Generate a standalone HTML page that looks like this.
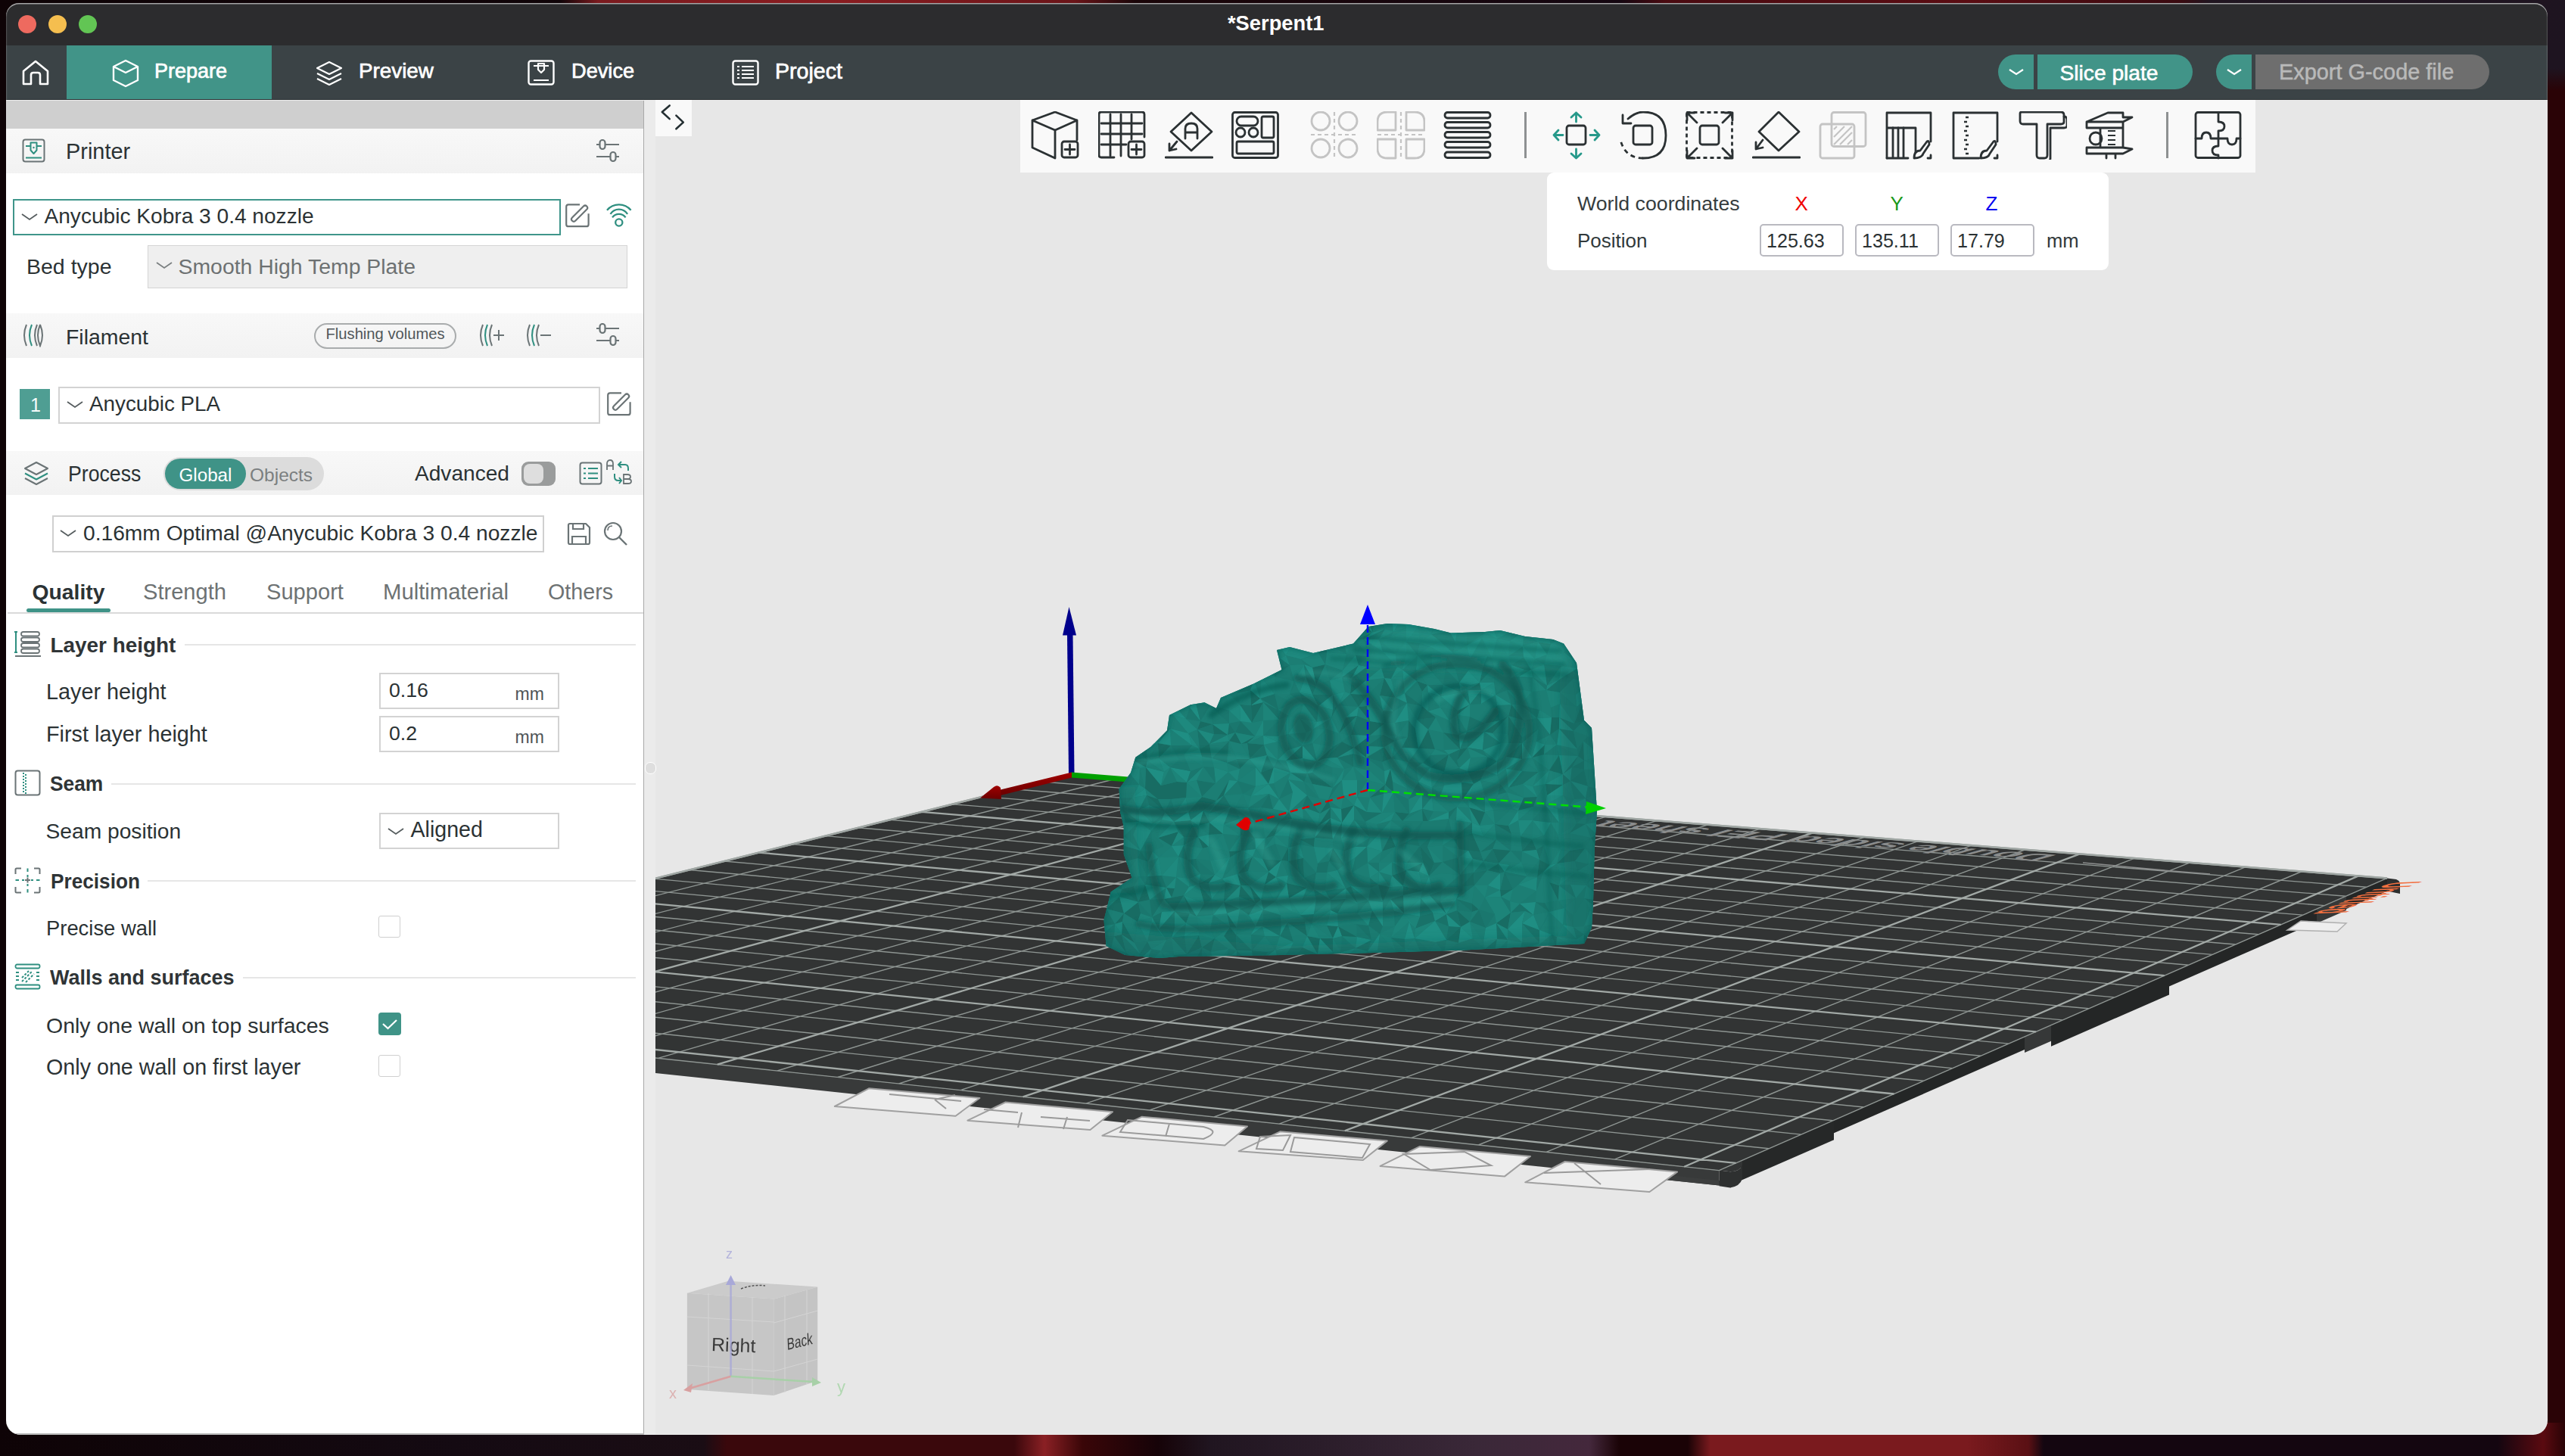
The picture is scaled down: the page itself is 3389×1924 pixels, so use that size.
<!DOCTYPE html><html><head><meta charset="utf-8"><style>
html,body{margin:0;padding:0;width:3389px;height:1924px;overflow:hidden;background:#120409;}
body{position:relative;font-family:"Liberation Sans",sans-serif;}
.t{position:absolute;line-height:0;white-space:nowrap;}
.r{position:absolute;display:block;}
#win{position:absolute;left:0;top:0;width:3389px;height:1924px;clip-path:inset(4px 23px 28px 8px round 17px 17px 19px 19px);}
</style></head><body><div class="r" style="left:0;top:0;width:3389px;height:60px;background:linear-gradient(90deg,#0e0306 0px,#100408 740px,#7a1a1e 790px,#8a1c20 1100px,#6a1418 1420px,#1a0508 1500px,#140610 2140px,#4a0a10 2200px,#5a0c12 2600px,#3a0a10 2880px,#201520 2920px,#1e1420 3389px);"></div><div class="r" style="left:3360px;top:60px;width:29px;height:1840px;background:linear-gradient(180deg,#1e1420 0px,#1e1420 30px,#2a0306 60px,#2a0306 1840px);"></div><div class="r" style="left:0;top:60px;width:12px;height:1840px;background:#0e0306;"></div><div class="r" style="left:0;top:1880px;width:3389px;height:44px;background:linear-gradient(90deg,#0e0306 0px,#140a12 600px,#1a0d14 930px,#3a080c 960px,#3a080c 1340px,#8a2024 1380px,#3a0608 1430px,#160308 1530px,#201520 1600px,#3a2838 1950px,#44283c 2100px,#1a0306 2140px,#1a0306 2230px,#7a1a1e 2260px,#7a1a1e 2600px,#5a1014 2680px,#140610 2700px,#140610 3300px,#5a0a10 3360px,#2a0306 3389px);"></div><div id="win"><div class="r" style="left:0px;top:0px;width:3389px;height:60px;background:#2c2c2e;"></div><div class="r" style="left:24px;top:20px;width:24px;height:24px;border-radius:12px;background:#ee6a5f;"></div><div class="r" style="left:64px;top:20px;width:24px;height:24px;border-radius:12px;background:#f5be4f;"></div><div class="r" style="left:104px;top:20px;width:24px;height:24px;border-radius:12px;background:#62c554;"></div><div class="t" style="left:1622.0px;top:30.9px;font-size:27.3px;color:#ffffff;font-weight:bold;">*Serpent1</div><div class="r" style="left:0px;top:60px;width:3389px;height:72px;background:#3b4346;"></div><div class="r" style="left:0px;top:131px;width:3389px;height:1px;background:#2b3133;"></div><div class="r" style="left:88px;top:60px;width:271px;height:71px;background:#419488;"></div><svg class="r" style="left:28px;top:78px;" width="38" height="38" viewBox="0 0 38 38"><path d="M3 16 L19 3 L35 16 L35 33 L25 33 L25 21 Q25 18 22 18 L16 18 Q13 18 13 21 L13 33 L3 33 Z" fill="none" stroke="#fff" stroke-width="2.6" stroke-linejoin="round"/></svg><svg class="r" style="left:146px;top:78px;" width="40" height="38" viewBox="0 0 40 38"><path d="M20 2 L36 10 L36 28 L20 36 L4 28 L4 10 Z M4 10 L20 18 L36 10 M20 18 L20 18" fill="none" stroke="#fff" stroke-width="2.4" stroke-linejoin="round"/></svg><div class="t" style="left:204.0px;top:94.4px;font-size:27.0px;color:#ffffff;font-weight:normal;-webkit-text-stroke:0.7px #fff">Prepare</div><svg class="r" style="left:416px;top:80px;" width="38" height="36" viewBox="0 0 38 36"><path d="M19 2 L35 10 L19 18 L3 10 Z" fill="none" stroke="#fff" stroke-width="2.2" stroke-linejoin="round"/><path d="M3 17 L19 25 L35 17" fill="none" stroke="#fff" stroke-width="2.2" stroke-linejoin="round"/><path d="M3 24 L19 32 L35 24" fill="none" stroke="#fff" stroke-width="2.2" stroke-linejoin="round"/></svg><div class="t" style="left:474.0px;top:94.2px;font-size:27.8px;color:#ffffff;font-weight:normal;-webkit-text-stroke:0.7px #fff">Preview</div><svg class="r" style="left:697px;top:79px;" width="36" height="36" viewBox="0 0 36 36"><rect x="1.5" y="1.5" width="33" height="31" rx="3" fill="none" stroke="#fff" stroke-width="2.4"/><path d="M8 8 L28 8 M14 5 L22 5 L22 13 L18 17 L14 13 Z M8 27 L28 27" fill="none" stroke="#fff" stroke-width="2.2" stroke-linejoin="round"/></svg><div class="t" style="left:755.0px;top:94.4px;font-size:27.2px;color:#ffffff;font-weight:normal;-webkit-text-stroke:0.7px #fff">Device</div><svg class="r" style="left:967px;top:79px;" width="36" height="36" viewBox="0 0 36 36"><rect x="1.5" y="1.5" width="33" height="31" rx="3" fill="none" stroke="#fff" stroke-width="2.4"/><path d="M7 9 L10 9 M13 9 L29 9 M7 14 L10 14 M13 14 L29 14 M7 19 L10 19 M13 19 L29 19 M7 24 L10 24 M13 24 L29 24" stroke="#fff" stroke-width="2.2"/></svg><div class="t" style="left:1024.0px;top:93.9px;font-size:28.6px;color:#ffffff;font-weight:normal;-webkit-text-stroke:0.7px #fff">Project</div><div class="r" style="left:2640px;top:72px;width:47px;height:46px;background:#419488;border-radius:23px 0 0 23px;"></div><svg class="r" style="left:2652px;top:88px;" width="24" height="14" viewBox="0 0 24 14"><path d="M3 4 L12 10 L21 4" fill="none" stroke="#fff" stroke-width="2.2"/></svg><div class="r" style="left:2692px;top:72px;width:205px;height:46px;background:#419488;border-radius:0 23px 23px 0;"></div><div class="t" style="left:2721.5px;top:95.5px;font-size:28.2px;color:#ffffff;font-weight:normal;-webkit-text-stroke:0.6px #fff">Slice plate</div><div class="r" style="left:2928px;top:72px;width:47px;height:46px;background:#419488;border-radius:23px 0 0 23px;"></div><svg class="r" style="left:2940px;top:88px;" width="24" height="14" viewBox="0 0 24 14"><path d="M3 4 L12 10 L21 4" fill="none" stroke="#fff" stroke-width="2.2"/></svg><div class="r" style="left:2980px;top:72px;width:309px;height:46px;background:#6e6e6e;border-radius:0 23px 23px 0;"></div><div class="t" style="left:3011.0px;top:95.3px;font-size:28.9px;color:#b9b9b9;font-weight:normal;-webkit-text-stroke:0.5px #b9b9b9">Export G-code file</div><div class="r" style="left:8px;top:132px;width:843px;height:1764px;background:#ffffff;"></div><div class="r" style="left:8px;top:132px;width:843px;height:1px;background:#ececec;"></div><div class="r" style="left:8px;top:133px;width:842px;height:37px;background:#cfcfcf;"></div><div class="r" style="left:850px;top:133px;width:1px;height:1763px;background:#a9a9a9;"></div><div class="r" style="left:851px;top:132px;width:15px;height:1764px;background:#ebebeb;"></div><div class="r" style="left:8px;top:170px;width:842px;height:59px;background:linear-gradient(#f8f8f8,#f2f2f2);"></div><div class="r" style="left:8px;top:414px;width:842px;height:59px;background:linear-gradient(#f8f8f8,#f2f2f2);"></div><div class="r" style="left:8px;top:596px;width:842px;height:58px;background:linear-gradient(#f8f8f8,#f2f2f2);"></div><svg class="r" style="left:29px;top:183px;" width="32" height="32" viewBox="0 0 32 32"><rect x="1.5" y="1.5" width="28" height="29" rx="3" fill="none" stroke="#6b7476" stroke-width="2"/><path d="M5 10 L26 10" stroke="#2f8f80" stroke-width="2"/><path d="M11.5 5.5 L19.5 5.5 L19.5 15.5 L15.5 20 L11.5 15.5 Z" fill="#f4f4f4" stroke="#2f8f80" stroke-width="2" stroke-linejoin="round"/><circle cx="15.5" cy="12" r="1.2" fill="#2f8f80"/><path d="M5 25.5 L26 25.5" stroke="#2f8f80" stroke-width="2"/></svg><div class="t" style="left:87.0px;top:200.3px;font-size:28.9px;color:#2b3234;font-weight:normal;">Printer</div><svg class="r" style="left:788px;top:184px;" width="32" height="32" viewBox="0 0 32 32"><path d="M0 7 L30 7 M0 23 L30 23" stroke="#6b7476" stroke-width="2.2"/><rect x="4.5" y="1" width="7" height="12" rx="3.5" fill="#f4f4f4" stroke="#6b7476" stroke-width="2.2"/><rect x="18.5" y="17" width="7" height="12" rx="3.5" fill="#f4f4f4" stroke="#6b7476" stroke-width="2.2"/></svg><div class="r" style="left:17px;top:263px;width:720px;height:44px;border:2px solid #3f958a;background:#fff;"></div><svg class="r" style="left:28px;top:281px;" width="22" height="12" viewBox="0 0 22 12"><path d="M1 2 L11 9 L21 2" fill="none" stroke="#555c5e" stroke-width="1.8"/></svg><div class="t" style="left:58.5px;top:286.3px;font-size:28.1px;color:#2b3234;font-weight:normal;">Anycubic Kobra 3 0.4 nozzle</div><svg class="r" style="left:746px;top:268px;" width="34" height="34" viewBox="0 0 34 34"><path d="M20 2.4 L5 2.4 Q2.2 2.4 2.2 5.2 L2.2 28.4 Q2.2 31.2 5 31.2 L28.8 31.2 Q31.6 31.2 31.6 28.4 L31.6 14.2" fill="none" stroke="#6b7476" stroke-width="2.2"/><rect x="-13.6" y="-3" width="27.2" height="6" rx="3" transform="translate(19.6 14.2) rotate(-45)" fill="none" stroke="#6b7476" stroke-width="2.2"/></svg><svg class="r" style="left:800px;top:266px;" width="36" height="36" viewBox="0 0 36 36"><path d="M2 11.7 A20.6 20.6 0 0 1 33.6 11.7 M6.5 16.8 A13.4 13.4 0 0 1 29.1 16.8 M9.05 21.3 A10.8 10.8 0 0 1 26.55 21.3" fill="none" stroke="#2f8f80" stroke-width="2.3"/><circle cx="17.8" cy="28" r="4.6" fill="none" stroke="#2f8f80" stroke-width="2.3"/></svg><div class="t" style="left:35.0px;top:352.1px;font-size:28.5px;color:#2b3234;font-weight:normal;">Bed type</div><div class="r" style="left:195px;top:324px;width:632px;height:55px;border:1.5px solid #d4d4d4;background:#efefef;"></div><svg class="r" style="left:206px;top:345px;" width="22" height="12" viewBox="0 0 22 12"><path d="M1 2 L11 9 L21 2" fill="none" stroke="#7a7f80" stroke-width="1.8"/></svg><div class="t" style="left:235.5px;top:352.2px;font-size:28.4px;color:#6d7172;font-weight:normal;">Smooth High Temp Plate</div><svg class="r" style="left:28px;top:427px;" width="34" height="32" viewBox="0 0 34 32"><path d="M7 2 Q1 16 7 30" fill="none" stroke="#6b7476" stroke-width="2"/><path d="M14 2 Q8 16 14 30" fill="none" stroke="#2f8f80" stroke-width="2"/><path d="M21 2 Q15 16 21 30" fill="none" stroke="#6b7476" stroke-width="2"/><path d="M25 2 Q31 16 25 30 Q19 16 25 2" fill="none" stroke="#6b7476" stroke-width="2"/></svg><div class="t" style="left:87.0px;top:444.5px;font-size:28.4px;color:#2b3234;font-weight:normal;">Filament</div><div class="r" style="left:415px;top:427px;width:184px;height:30px;border:2px solid #a9acad;border-radius:17px;"></div><div class="t" style="left:430.5px;top:441.2px;font-size:20.2px;color:#50575a;font-weight:normal;">Flushing volumes</div><svg class="r" style="left:632px;top:427px;" width="36" height="32" viewBox="0 0 36 32"><path d="M6 2 Q0 16 6 30" fill="none" stroke="#6b7476" stroke-width="2"/><path d="M12 2 Q6 16 12 30" fill="none" stroke="#2f8f80" stroke-width="2"/><path d="M18 2 Q12 16 18 30" fill="none" stroke="#6b7476" stroke-width="2"/><path d="M20 16 L34 16 M27 9 L27 23" stroke="#6b7476" stroke-width="2"/></svg><svg class="r" style="left:694px;top:427px;" width="36" height="32" viewBox="0 0 36 32"><path d="M6 2 Q0 16 6 30" fill="none" stroke="#6b7476" stroke-width="2"/><path d="M12 2 Q6 16 12 30" fill="none" stroke="#2f8f80" stroke-width="2"/><path d="M18 2 Q12 16 18 30" fill="none" stroke="#6b7476" stroke-width="2"/><path d="M20 16 L34 16" stroke="#6b7476" stroke-width="2"/></svg><svg class="r" style="left:788px;top:427px;" width="32" height="32" viewBox="0 0 32 32"><path d="M0 7 L30 7 M0 23 L30 23" stroke="#6b7476" stroke-width="2.2"/><rect x="4.5" y="1" width="7" height="12" rx="3.5" fill="#f4f4f4" stroke="#6b7476" stroke-width="2.2"/><rect x="18.5" y="17" width="7" height="12" rx="3.5" fill="#f4f4f4" stroke="#6b7476" stroke-width="2.2"/></svg><div class="r" style="left:26px;top:514px;width:40px;height:40px;background:#4f9e93;"></div><div class="t" style="left:40.0px;top:535.3px;font-size:25px;color:#f4fbfa;font-weight:normal;">1</div><div class="r" style="left:77px;top:511px;width:712px;height:45px;border:2px solid #d3d3d3;background:#fff;"></div><svg class="r" style="left:88px;top:529px;" width="22" height="12" viewBox="0 0 22 12"><path d="M1 2 L11 9 L21 2" fill="none" stroke="#555c5e" stroke-width="1.8"/></svg><div class="t" style="left:118.0px;top:534.4px;font-size:27.8px;color:#2b3234;font-weight:normal;">Anycubic PLA</div><svg class="r" style="left:801px;top:517px;" width="34" height="34" viewBox="0 0 34 34"><path d="M20 2.4 L5 2.4 Q2.2 2.4 2.2 5.2 L2.2 28.4 Q2.2 31.2 5 31.2 L28.8 31.2 Q31.6 31.2 31.6 28.4 L31.6 14.2" fill="none" stroke="#6b7476" stroke-width="2.2"/><rect x="-13.6" y="-3" width="27.2" height="6" rx="3" transform="translate(19.6 14.2) rotate(-45)" fill="none" stroke="#6b7476" stroke-width="2.2"/></svg><svg class="r" style="left:31px;top:609px;" width="34" height="34" viewBox="0 0 34 34"><path d="M17 2 L32 10 L17 18 L2 10 Z" fill="none" stroke="#6b7476" stroke-width="2" stroke-linejoin="round"/><path d="M2 16.5 L17 24.5 L32 16.5" fill="none" stroke="#2f8f80" stroke-width="2" stroke-linejoin="round"/><path d="M2 23 L17 31 L32 23" fill="none" stroke="#6b7476" stroke-width="2" stroke-linejoin="round"/></svg><div class="t" style="left:90.0px;top:625.9px;font-size:29px;color:#2b3234;font-weight:normal;transform:scaleX(0.92);transform-origin:0 0;">Process</div><div class="r" style="left:216px;top:604px;width:212px;height:44px;border-radius:22px;background:#dcdcdc;"></div><div class="r" style="left:218px;top:606px;width:107px;height:40px;border-radius:20px;background:#3f9387;"></div><div class="t" style="left:236.5px;top:627.6px;font-size:24.2px;color:#ffffff;font-weight:normal;">Global</div><div class="t" style="left:330.0px;top:627.5px;font-size:24.5px;color:#7b7f80;font-weight:normal;">Objects</div><div class="t" style="left:548.0px;top:626.3px;font-size:28.1px;color:#2b3234;font-weight:normal;">Advanced</div><div class="r" style="left:689px;top:610px;width:45px;height:32px;border-radius:9px;background:#9a9c9c;"></div><div class="r" style="left:692px;top:613px;width:26px;height:26px;border-radius:8px;background:#dedede;"></div><svg class="r" style="left:765px;top:610px;" width="32" height="32" viewBox="0 0 32 32"><rect x="1.5" y="1.5" width="28" height="28" rx="3" fill="none" stroke="#6b7476" stroke-width="2"/><path d="M6 9 L9 9 M12 9 L25 9 M6 15.5 L9 15.5 M12 15.5 L25 15.5 M6 22 L9 22 M12 22 L25 22" stroke="#2f8f80" stroke-width="2"/></svg><svg class="r" style="left:800px;top:607px;" width="36" height="38" viewBox="0 0 36 38"><path d="M2 14 L2 6 Q2 1 6 1 Q10 1 10 6 L10 14 M2 8.5 L10 8.5" fill="none" stroke="#6b7476" stroke-width="1.8"/><path d="M24 32 L24 20 L29 20 Q33 20 33 23 Q33 26 29 26 L24 26 L30 26 Q34 26 34 29 Q34 32 30 32 Z" fill="none" stroke="#6b7476" stroke-width="1.8"/><path d="M21 3 L17 7 L21 11 M17 7 L26 7 Q30 7 30 12 L30 15" fill="none" stroke="#2f8f80" stroke-width="2"/><path d="M12 19 L12 23 Q12 28 17 28 L21 28 M18 24 L21 28 L18 32" fill="none" stroke="#2f8f80" stroke-width="2"/></svg><div class="r" style="left:69px;top:681px;width:646px;height:45px;border:2px solid #d0d0d0;background:#fff;"></div><svg class="r" style="left:79px;top:699px;" width="22" height="12" viewBox="0 0 22 12"><path d="M1 2 L11 9 L21 2" fill="none" stroke="#555c5e" stroke-width="1.8"/></svg><div class="t" style="left:110.0px;top:704.2px;font-size:28.2px;color:#2b3234;font-weight:normal;">0.16mm Optimal @Anycubic Kobra 3 0.4 nozzle</div><svg class="r" style="left:749px;top:690px;" width="32" height="31" viewBox="0 0 32 31"><path d="M2 4 Q2 2 4 2 L25 2 L30 7 L30 27 Q30 29 28 29 L4 29 Q2 29 2 27 Z" fill="none" stroke="#6b7476" stroke-width="2.2" stroke-linejoin="round"/><path d="M8 2 L8 9 L22 9 L22 2 M7 29 L7 19 L25 19 L25 29" fill="none" stroke="#6b7476" stroke-width="2.2"/></svg><svg class="r" style="left:797px;top:689px;" width="33" height="33" viewBox="0 0 33 33"><circle cx="13" cy="13" r="11" fill="none" stroke="#6b7476" stroke-width="2.2"/><path d="M21 21 L31 31" stroke="#6b7476" stroke-width="2.4"/><path d="M6 12 Q6 6 12 6" fill="none" stroke="#6b7476" stroke-width="1.6"/></svg><div class="t" style="left:42.5px;top:782.2px;font-size:28.3px;color:#2b3234;font-weight:bold;">Quality</div><div class="r" style="left:35px;top:804px;width:111px;height:5px;background:#3f9387;border-radius:3px;"></div><div class="t" style="left:189.0px;top:781.9px;font-size:29.1px;color:#6d7273;font-weight:normal;">Strength</div><div class="t" style="left:352.0px;top:781.9px;font-size:29.1px;color:#6d7273;font-weight:normal;">Support</div><div class="t" style="left:506.0px;top:781.8px;font-size:29.3px;color:#6d7273;font-weight:normal;">Multimaterial</div><div class="t" style="left:724.0px;top:782.0px;font-size:28.7px;color:#6d7273;font-weight:normal;">Others</div><div class="r" style="left:10px;top:809px;width:840px;height:2px;background:#dadada;"></div><svg class="r" style="left:19px;top:833px;" width="36" height="36" viewBox="0 0 36 36"><path d="M2 2 L2 29 M0 2 L4 2 M0 29 L4 29" stroke="#2f8f80" stroke-width="2"/><rect x="9" y="2" width="24" height="5.5" rx="2.75" fill="none" stroke="#6b7476" stroke-width="1.8"/><rect x="9" y="9.5" width="24" height="5.5" rx="2.75" fill="none" stroke="#6b7476" stroke-width="1.8"/><rect x="9" y="17" width="24" height="5.5" rx="2.75" fill="none" stroke="#6b7476" stroke-width="1.8"/><rect x="9" y="24.5" width="24" height="5.5" rx="2.75" fill="none" stroke="#6b7476" stroke-width="1.8"/><path d="M1 34 L35 34" stroke="#6b7476" stroke-width="1.8"/></svg><div class="t" style="left:66.5px;top:852.9px;font-size:27.9px;color:#2f3436;font-weight:bold;">Layer height</div><div class="r" style="left:244px;top:851px;width:596px;height:2px;background:#e6e6e6;"></div><div class="t" style="left:61.0px;top:914.0px;font-size:28.8px;color:#2b3234;font-weight:normal;">Layer height</div><div class="r" style="left:501px;top:889px;width:234px;height:44px;border:2px solid #d3d3d3;background:#fff;"></div><div class="t" style="left:514.0px;top:912.3px;font-size:26.7px;color:#2b3234;font-weight:normal;">0.16</div><div class="t" style="left:680.5px;top:917.0px;font-size:23px;color:#4f5557;font-weight:normal;">mm</div><div class="t" style="left:61.0px;top:970.0px;font-size:28.8px;color:#2b3234;font-weight:normal;">First layer height</div><div class="r" style="left:501px;top:946px;width:234px;height:44px;border:2px solid #d3d3d3;background:#fff;"></div><div class="t" style="left:514.0px;top:968.7px;font-size:26.7px;color:#2b3234;font-weight:normal;">0.2</div><div class="t" style="left:680.5px;top:973.5px;font-size:23px;color:#4f5557;font-weight:normal;">mm</div><svg class="r" style="left:19px;top:1017px;" width="36" height="36" viewBox="0 0 36 36"><rect x="1.5" y="1.5" width="32" height="32" rx="3" fill="none" stroke="#6b7476" stroke-width="2"/><path d="M12 4 L12 32" stroke="#2f8f80" stroke-width="2" stroke-dasharray="2 2"/><path d="M15 4 L15 32" stroke="#2f8f80" stroke-width="2" stroke-dasharray="2 2" stroke-dashoffset="2"/></svg><div class="t" style="left:66.0px;top:1036.3px;font-size:28px;color:#2f3436;font-weight:bold;transform:scaleX(0.94);transform-origin:0 0;">Seam</div><div class="r" style="left:147px;top:1035px;width:693px;height:2px;background:#e6e6e6;"></div><div class="t" style="left:60.5px;top:1098.2px;font-size:28.2px;color:#2b3234;font-weight:normal;">Seam position</div><div class="r" style="left:501px;top:1074px;width:234px;height:44px;border:2px solid #d3d3d3;background:#fff;"></div><svg class="r" style="left:512px;top:1093px;" width="22" height="12" viewBox="0 0 22 12"><path d="M1 2 L11 9 L21 2" fill="none" stroke="#555c5e" stroke-width="1.8"/></svg><div class="t" style="left:542.5px;top:1096.1px;font-size:28.6px;color:#2b3234;font-weight:normal;">Aligned</div><svg class="r" style="left:19px;top:1146px;" width="36" height="36" viewBox="0 0 36 36"><path d="M1.5 9 L1.5 3 Q1.5 1.5 3 1.5 L9 1.5 M26 1.5 L32 1.5 Q33.5 1.5 33.5 3 L33.5 9 M33.5 26 L33.5 32 Q33.5 33.5 32 33.5 L26 33.5 M9 33.5 L3 33.5 Q1.5 33.5 1.5 32 L1.5 26" fill="none" stroke="#6b7476" stroke-width="2"/><path d="M1.5 17 L6 17 M10 17 L13 17 M22 17 L25 17 M29 17 L33.5 17 M17.5 1.5 L17.5 6 M17.5 10 L17.5 13 M17.5 22 L17.5 25 M17.5 29 L17.5 33.5" stroke="#2f8f80" stroke-width="2"/><path d="M14 17 L21 17 M17.5 13.5 L17.5 20.5" stroke="#6b7476" stroke-width="2"/></svg><div class="t" style="left:67.0px;top:1164.6px;font-size:28px;color:#2f3436;font-weight:bold;transform:scaleX(0.936);transform-origin:0 0;">Precision</div><div class="r" style="left:195px;top:1163px;width:645px;height:2px;background:#e6e6e6;"></div><div class="t" style="left:61.0px;top:1226.8px;font-size:27.4px;color:#2b3234;font-weight:normal;">Precise wall</div><div class="r" style="left:500px;top:1210px;width:27px;height:27px;border:1.5px solid #cfcfcf;border-radius:3px;background:#fff;"></div><svg class="r" style="left:19px;top:1273px;" width="36" height="36" viewBox="0 0 36 36"><rect x="1.5" y="1.5" width="32" height="5" rx="2" fill="none" stroke="#2f8f80" stroke-width="1.8"/><rect x="1.5" y="28.5" width="32" height="5" rx="2" fill="none" stroke="#2f8f80" stroke-width="1.8"/><path d="M2 12 L6 12 M2 17 L6 17 M2 22 L6 22 M29 12 L33 12 M29 17 L33 17 M29 22 L33 22" stroke="#2f8f80" stroke-width="1.8"/><path d="M10 24 L24 10 M15 25 L26 14 M10 19 L19 10" stroke="#2f8f80" stroke-width="2" stroke-dasharray="3 2"/></svg><div class="t" style="left:66.0px;top:1292.3px;font-size:28px;color:#2f3436;font-weight:bold;transform:scaleX(0.964);transform-origin:0 0;">Walls and surfaces</div><div class="r" style="left:321px;top:1291px;width:519px;height:2px;background:#e6e6e6;"></div><div class="t" style="left:61.0px;top:1354.8px;font-size:28.5px;color:#2b3234;font-weight:normal;">Only one wall on top surfaces</div><div class="r" style="left:500px;top:1338px;width:30px;height:30px;border-radius:4px;background:#3f9387;"></div><svg class="r" style="left:500px;top:1338px;" width="30" height="30" viewBox="0 0 30 30"><path d="M6 15 L12.5 21 L24 10" fill="none" stroke="#fff" stroke-width="2.2"/></svg><div class="t" style="left:61.0px;top:1410.4px;font-size:28.7px;color:#2b3234;font-weight:normal;">Only one wall on first layer</div><div class="r" style="left:500px;top:1394px;width:27px;height:27px;border:1.5px solid #cfcfcf;border-radius:3px;background:#fff;"></div><div class="r" style="left:8px;top:1894px;width:843px;height:2px;background:#b4b4b4;"></div><svg class="r" style="left:866px;top:132px" width="2500" height="1764" viewBox="866 132 2500 1764"><rect x="866" y="132" width="2500" height="1764" fill="#e7e7e7"/><polygon points="2300.0,1534.1 3154.0,1160.4 3154.0,1177.4 2300.0,1551.1" fill="#242626"/><polygon points="2300.0,1534.1 2423.0,1480.3 2423.0,1506.3 2300.0,1560.1" fill="#262828"/><polygon points="2710.0,1354.7 2866.0,1286.4 2866.0,1314.4 2710.0,1382.7" fill="#242626"/><polygon points="2675.0,1370.0 2710.0,1354.7 2710.0,1375.7 2675.0,1391.0" fill="#363838"/><polygon points="3061.0,1201.1 3100.0,1184.0 3100.0,1203.0 3061.0,1220.1" fill="#363838"/><polygon points="198.5,1327.4 2271.4,1546.6 2271.4,1566.6 198.5,1347.4" fill="#383a3a"/><polygon points="2151.4,1554.1 2271.4,1566.6 2275.4,1560.6 2156.4,1547.6" fill="#3c3e3e"/><path d="M2271.4,1546.6 L2286,1548.3 Q2299,1548 2302,1539.4 L2302,1557.5 Q2299,1567.5 2286,1569.5 L2271.4,1567.2 Z" fill="#2e3030"/><path d="M2271.4,1546.6 L2286,1548.3 Q2299,1548 2302,1539.4 L2302,1533 Z" fill="#323434"/><path d="M3154,1160.4 L3166,1162 Q3171,1164 3171,1168 L3171,1181 L3154,1177.4 Z" fill="#2c2e2e"/><polygon points="1415.7,1023.4 3154.0,1160.4 2271.4,1546.6 198.5,1327.4" fill="#323434"/><path d="M1477.5,1028.3L270.2,1335.0M1377.3,1033.0L3126.9,1172.2M1539.7,1033.2L342.6,1342.7M1338.4,1042.7L3099.4,1184.3M1602.4,1038.1L415.6,1350.4M1298.8,1052.6L3071.3,1196.6M1665.6,1043.1L489.4,1358.2M1258.5,1062.7L3042.8,1209.1M1793.5,1053.2L639.2,1374.0M1176.0,1083.3L2984.0,1234.8M1858.2,1058.3L715.2,1382.1M1133.7,1093.8L2953.9,1248.0M1923.4,1063.4L792.0,1390.2M1090.6,1104.6L2923.1,1261.4M1989.1,1068.6L869.5,1398.4M1046.9,1115.5L2891.7,1275.2M2122.1,1079.1L1027.0,1415.0M957.0,1138.0L2827.2,1303.4M2189.4,1084.4L1106.9,1423.5M911.0,1149.5L2794.0,1317.9M2257.3,1089.7L1187.6,1432.0M864.0,1161.2L2760.1,1332.8M2325.7,1095.1L1269.2,1440.6M816.3,1173.1L2725.5,1347.9M2464.2,1106.0L1434.9,1458.1M718.1,1197.6L2654.2,1379.1M2534.2,1111.6L1519.0,1467.0M667.7,1210.2L2617.5,1395.2M2604.9,1117.1L1604.0,1476.0M616.4,1223.1L2580.0,1411.6M2676.2,1122.7L1690.0,1485.1M564.1,1236.1L2541.7,1428.3M2820.4,1134.1L1864.6,1503.6M456.4,1263.0L2462.6,1463.0M2893.5,1139.9L1953.3,1513.0M401.0,1276.8L2421.7,1480.8M2967.1,1145.7L2042.9,1522.4M344.6,1290.9L2380.0,1499.1M3041.4,1151.5L2133.6,1532.0M287.0,1305.3L2337.3,1517.8M3154.0,1160.4L2271.4,1546.6M198.5,1327.4L2271.4,1546.6" stroke="#8e9592" stroke-width="1.4" fill="none"/><path d="M1415.7,1023.4L198.5,1327.4M1415.7,1023.4L3154.0,1160.4M1729.3,1048.1L564.0,1366.1M1217.6,1072.9L3013.7,1221.8M2055.3,1073.8L947.8,1406.7M1002.4,1126.6L2859.8,1289.1M2394.6,1100.6L1351.6,1449.3M767.7,1185.3L2690.2,1363.3M2748.0,1128.4L1776.8,1494.3M510.7,1249.4L2502.5,1445.5M3116.3,1157.4L2225.2,1541.7M228.3,1320.0L2293.6,1536.9" stroke="#a2a9a6" stroke-width="2.3" fill="none"/><path d="M1415.7,1023.4L3154.0,1160.4" stroke="#9fa6a3" stroke-width="2.5"/><path d="M1415.7,1023.4L198.5,1327.4" stroke="#9fa6a3" stroke-width="2.5"/><polygon points="1148.4,1438.2 1294.4,1451.0 1262.5,1474.7 1102.8,1462.0" fill="#ededed" stroke="#a0a0a0" stroke-width="2" stroke-linejoin="round"/><polygon points="1328.6,1456.5 1470.0,1469.3 1440.4,1493.0 1278.4,1480.7" fill="#ededed" stroke="#a0a0a0" stroke-width="2" stroke-linejoin="round"/><polygon points="1508.8,1475.7 1648.0,1488.4 1618.3,1513.5 1456.4,1500.7" fill="#ededed" stroke="#a0a0a0" stroke-width="2" stroke-linejoin="round"/><polygon points="1691.3,1495.3 1832.7,1507.6 1800.8,1533.0 1636.6,1521.3" fill="#ededed" stroke="#a0a0a0" stroke-width="2" stroke-linejoin="round"/><polygon points="1876.0,1514.9 2022.0,1528.0 1987.8,1554.6 1823.6,1540.9" fill="#ededed" stroke="#a0a0a0" stroke-width="2" stroke-linejoin="round"/><polygon points="2067.7,1535.0 2216.0,1548.6 2179.4,1575.0 2015.2,1562.3" fill="#ededed" stroke="#a0a0a0" stroke-width="2" stroke-linejoin="round"/><path d="M1175,1446 L1270,1455 M1235,1453 L1262,1447 M1235,1453 L1250,1465" stroke="#9a9a9a" stroke-width="2" fill="none"/><path d="M1300,1466 L1345,1470 M1375,1476 L1440,1481 M1350,1470 L1345,1490 M1410,1476 L1405,1492" stroke="#9a9a9a" stroke-width="2" fill="none"/><path d="M1490,1480 L1590,1489 Q1615,1495 1590,1505 L1480,1496 Z M1545,1485 L1540,1502" stroke="#9a9a9a" stroke-width="2" fill="none"/><path d="M1665,1502 L1705,1500 L1695,1520 L1660,1518 Z M1710,1503 L1810,1512 L1800,1530 L1705,1522 Z" stroke="#9a9a9a" stroke-width="2" fill="none"/><path d="M1855,1525 L1935,1522 L1970,1540 L1890,1546 Z" stroke="#9a9a9a" stroke-width="2" fill="none"/><path d="M2040,1550 L2180,1545 M2080,1537 L2115,1565" stroke="#9a9a9a" stroke-width="2" fill="none"/><text transform="matrix(-1,-0.0767,1.5,-0.42,2720,1130)" font-family="Liberation Sans" font-weight="bold" font-size="28" textLength="597" lengthAdjust="spacingAndGlyphs" fill="#8a8c8c">Double sided PEI sheet</text><path d="M2752,1140 L2860,1150 M2820,1147 L2920,1155" stroke="#8c8e8e" stroke-width="1.5"/><text transform="matrix(-1.15,0.46,-2.9,0.12,3160,1166)" font-family="Liberation Sans" font-weight="bold" font-size="21" textLength="92" lengthAdjust="spacingAndGlyphs" fill="#f2703f">Untitled</text><polygon points="3040,1217 3100,1220 3088,1231 3022,1229" fill="#eeeeee" stroke="#b0b0b0" stroke-width="1.5"/><polygon points="1410,839 1417.5,839 1419.5,1023 1412,1023" fill="#00008c"/><polygon points="1404,839.5 1422,839.5 1412.5,802" fill="#00008c"/><polygon points="1415.7,1020.5 1490,1026.5 1490,1033.5 1415.7,1027.5" fill="#00a000"/><defs><linearGradient id="rg" x1="0" y1="0" x2="0" y2="1"><stop offset="0" stop-color="#a00000"/><stop offset="1" stop-color="#6a0000"/></linearGradient></defs><polygon points="1416,1020.5 1416,1027.5 1322,1051 1320,1044" fill="url(#rg)"/><path d="M1295,1054.5 L1313,1040 Q1318,1036 1322,1041 L1323,1056 Z" fill="url(#rg)"/><defs>
<clipPath id="mclip"><polygon points="1687.0,859.0 1704.0,855.0 1735.0,863.0 1788.0,850.5 1808.0,828.0 1833.0,824.0 1861.0,825.0 1895.0,831.0 1917.0,836.5 1962.0,835.0 1982.0,833.0 2015.0,841.0 2052.0,845.0 2066.0,850.5 2083.0,876.0 2093.0,951.7 2103.0,962.0 2106.7,1020.0 2110.0,1071.8 2106.7,1123.0 2105.0,1192.0 2103.0,1226.0 2093.0,1247.0 1935.0,1255.5 1815.0,1259.0 1694.7,1262.0 1557.3,1264.0 1532.7,1266.0 1486.4,1262.0 1461.6,1250.0 1458.5,1215.7 1467.8,1178.6 1495.6,1160.0 1484.8,1129.0 1484.8,1092.0 1480.2,1073.5 1478.6,1042.6 1494.0,1021.0 1500.3,1000.8 1520.4,987.0 1542.0,965.3 1545.0,945.0 1573.0,931.3 1591.5,928.2 1607.0,936.0 1613.0,922.0 1656.4,903.5 1693.5,885.0"/></clipPath>
<filter id="bl2" x="-5%" y="-5%" width="110%" height="110%"><feGaussianBlur stdDeviation="2.8"/></filter>
<filter id="bl5" x="-5%" y="-5%" width="110%" height="110%"><feGaussianBlur stdDeviation="6"/></filter>
</defs><polygon points="1687.0,859.0 1704.0,855.0 1735.0,863.0 1788.0,850.5 1808.0,828.0 1833.0,824.0 1861.0,825.0 1895.0,831.0 1917.0,836.5 1962.0,835.0 1982.0,833.0 2015.0,841.0 2052.0,845.0 2066.0,850.5 2083.0,876.0 2093.0,951.7 2103.0,962.0 2106.7,1020.0 2110.0,1071.8 2106.7,1123.0 2105.0,1192.0 2103.0,1226.0 2093.0,1247.0 1935.0,1255.5 1815.0,1259.0 1694.7,1262.0 1557.3,1264.0 1532.7,1266.0 1486.4,1262.0 1461.6,1250.0 1458.5,1215.7 1467.8,1178.6 1495.6,1160.0 1484.8,1129.0 1484.8,1092.0 1480.2,1073.5 1478.6,1042.6 1494.0,1021.0 1500.3,1000.8 1520.4,987.0 1542.0,965.3 1545.0,945.0 1573.0,931.3 1591.5,928.2 1607.0,936.0 1613.0,922.0 1656.4,903.5 1693.5,885.0" fill="#1c7e74"/><g clip-path="url(#mclip)"><path d="M1451,818L1471,820L1444,837ZM1495,815L1499,837L1485,837ZM1495,815L1523,817L1519,830ZM1600,820L1623,811L1609,832ZM1655,811L1653,831L1638,836ZM1739,817L1752,820L1751,831ZM1775,821L1769,836L1751,831ZM1820,810L1839,816L1830,831ZM1873,813L1896,815L1891,838ZM1907,815L1928,810L1915,834ZM2024,820L2042,832L2026,834ZM1485,837L1504,853L1482,851ZM1571,838L1582,827L1582,853ZM1638,836L1640,845L1622,852ZM1709,828L1716,845L1707,852ZM1858,829L1858,848L1837,843ZM1874,828L1891,838L1876,850ZM1469,853L1468,862L1445,867ZM1753,851L1779,864L1753,862ZM1790,846L1791,866L1779,864ZM2049,851L2066,862L2044,865ZM2135,843L2127,869L2115,865ZM1649,867L1670,864L1657,879ZM1920,863L1942,871L1923,884ZM2028,871L2040,878L2023,885ZM2044,865L2063,880L2040,878ZM2077,870L2091,870L2094,887ZM1484,881L1490,902L1464,895ZM1605,878L1624,900L1607,899ZM1871,885L1892,888L1886,905ZM1892,888L1907,905L1886,905ZM2014,885L2007,894L1997,896ZM2023,885L2044,906L2025,895ZM1568,896L1574,917L1547,912ZM1590,902L1591,912L1574,917ZM1607,899L1624,900L1619,912ZM1657,899L1666,894L1665,923ZM1684,894L1710,900L1704,917ZM1684,894L1704,917L1684,917ZM1838,897L1854,897L1856,916ZM1838,897L1856,916L1844,922ZM1928,902L1943,905L1939,912ZM1619,912L1624,939L1599,932ZM1634,916L1652,912L1638,931ZM1879,914L1887,915L1887,940ZM1904,920L1926,939L1903,935ZM1991,912L2013,912L2009,931ZM2061,915L2082,918L2083,934ZM2116,918L2129,921L2108,937ZM1513,930L1532,936L1531,950ZM1624,939L1639,953L1624,956ZM1708,929L1722,930L1702,946ZM1742,933L1759,949L1740,954ZM1795,934L1810,953L1793,946ZM1859,929L1872,951L1861,952ZM1926,939L1925,945L1915,952ZM1997,931L2009,931L2013,952ZM2108,937L2135,930L2125,952ZM1518,952L1531,950L1541,964ZM1531,950L1550,945L1546,963ZM1639,953L1654,955L1658,973ZM1654,955L1669,952L1658,973ZM1702,946L1717,949L1702,970ZM1759,949L1752,963L1734,964ZM1925,945L1942,947L1938,967ZM1454,973L1465,983L1453,986ZM1515,969L1541,964L1530,982ZM1546,963L1575,985L1547,985ZM1769,969L1785,971L1773,980ZM1860,974L1852,988L1843,979ZM2048,971L2041,984L2030,980ZM1575,985L1585,990L1564,997ZM1624,979L1640,983L1634,1003ZM1640,983L1651,1003L1634,1003ZM1670,984L1688,980L1688,1004ZM1843,979L1852,988L1839,1002ZM1983,982L1993,982L1978,1006ZM2011,982L2030,980L2024,1001ZM2131,981L2134,1004L2116,999ZM1447,1007L1472,996L1464,1016ZM1564,997L1588,1000L1590,1013ZM1621,1008L1638,1016L1623,1020ZM2011,1003L2024,1001L2033,1020ZM2024,1001L2040,997L2047,1018ZM2040,997L2060,998L2047,1018ZM2085,999L2093,1005L2077,1014ZM2116,999L2132,1021L2118,1016ZM1659,1014L1659,1039L1635,1032ZM1871,1014L1890,1014L1874,1033ZM1939,1019L1947,1036L1931,1034ZM2047,1018L2065,1023L2042,1036ZM2118,1016L2108,1042L2098,1039ZM1479,1038L1480,1055L1468,1057ZM1479,1038L1505,1037L1480,1055ZM1505,1037L1496,1054L1480,1055ZM1513,1042L1530,1056L1515,1051ZM1568,1034L1588,1053L1567,1054ZM1807,1031L1830,1037L1810,1054ZM1840,1033L1859,1042L1841,1047ZM1859,1042L1861,1056L1841,1047ZM2012,1036L2031,1053L2013,1054ZM2065,1037L2075,1032L2080,1056ZM1496,1054L1505,1070L1483,1069ZM1617,1051L1642,1049L1626,1066ZM1642,1049L1632,1068L1626,1066ZM1642,1049L1653,1052L1649,1068ZM1841,1047L1843,1073L1826,1074ZM1904,1049L1932,1057L1925,1066ZM1979,1050L1991,1047L1973,1070ZM1445,1064L1470,1065L1446,1081ZM1483,1069L1487,1087L1462,1088ZM1597,1075L1626,1066L1598,1087ZM1666,1067L1682,1069L1691,1085ZM1879,1069L1880,1085L1853,1085ZM1962,1073L1975,1089L1955,1091ZM2074,1064L2083,1088L2060,1087ZM2097,1075L2095,1089L2083,1088ZM2117,1068L2135,1065L2129,1083ZM1505,1086L1523,1088L1521,1098ZM1584,1091L1597,1103L1583,1106ZM1617,1089L1638,1082L1639,1104ZM1804,1086L1819,1089L1823,1101ZM1838,1084L1863,1103L1837,1103ZM1924,1084L1945,1087L1920,1108ZM2025,1084L2040,1104L2024,1109ZM2083,1088L2074,1101L2059,1104ZM2129,1083L2124,1099L2110,1103ZM1465,1102L1465,1118L1446,1127ZM1564,1106L1564,1117L1548,1118ZM1616,1102L1624,1125L1597,1119ZM1684,1104L1685,1115L1670,1122ZM1684,1104L1703,1105L1702,1120ZM1796,1100L1810,1107L1791,1119ZM1810,1107L1823,1101L1806,1119ZM1863,1103L1872,1105L1854,1115ZM1891,1105L1908,1101L1886,1119ZM1977,1109L1996,1124L1972,1122ZM2074,1101L2102,1107L2074,1124ZM2102,1107L2113,1125L2094,1121ZM2124,1099L2128,1122L2113,1125ZM1548,1118L1557,1132L1531,1133ZM1597,1119L1625,1133L1599,1137ZM1659,1122L1668,1135L1655,1132ZM1702,1120L1722,1134L1702,1138ZM1761,1121L1777,1124L1776,1143ZM1886,1119L1906,1117L1906,1139ZM1906,1117L1928,1122L1927,1133ZM1928,1122L1940,1124L1927,1133ZM1484,1139L1503,1134L1483,1160ZM1557,1132L1572,1161L1554,1159ZM1822,1140L1839,1139L1822,1152ZM2057,1141L2084,1151L2062,1160ZM1572,1161L1584,1168L1571,1172ZM1649,1151L1676,1152L1651,1170ZM1702,1157L1723,1160L1727,1173ZM1723,1160L1736,1175L1727,1173ZM1888,1158L1904,1154L1905,1177ZM1888,1158L1905,1177L1892,1175ZM1904,1154L1929,1156L1905,1177ZM1619,1166L1617,1192L1601,1188ZM1639,1170L1651,1170L1659,1194ZM1671,1169L1685,1191L1666,1189ZM1736,1175L1739,1189L1720,1190ZM1948,1170L1945,1194L1924,1188ZM2096,1170L2093,1187L2082,1187ZM1659,1194L1669,1202L1650,1209ZM1685,1191L1708,1205L1692,1209ZM2082,1187L2079,1210L2067,1200ZM2093,1187L2101,1202L2079,1210ZM1522,1212L1522,1219L1503,1218ZM1581,1211L1599,1228L1584,1229ZM1692,1209L1708,1205L1701,1219ZM1708,1205L1718,1209L1701,1219ZM1718,1209L1724,1218L1701,1219ZM2079,1210L2101,1202L2093,1224ZM2079,1210L2093,1224L2079,1225ZM2101,1202L2117,1206L2109,1220ZM1452,1225L1473,1221L1455,1236ZM1503,1218L1516,1244L1499,1246ZM1567,1220L1565,1237L1548,1239ZM1584,1229L1599,1228L1605,1240ZM1733,1221L1761,1240L1744,1240ZM1862,1218L1856,1241L1838,1239ZM1942,1218L1960,1245L1946,1240ZM2065,1222L2083,1241L2057,1238ZM1472,1237L1488,1259L1468,1253ZM1633,1235L1653,1235L1654,1256ZM1761,1240L1772,1258L1761,1258ZM1773,1237L1793,1238L1791,1253ZM1823,1234L1838,1239L1845,1259ZM1869,1240L1877,1258L1856,1254ZM1946,1240L1960,1245L1962,1254ZM1992,1242L1990,1259L1974,1262ZM2050,1235L2041,1262L2027,1254ZM2110,1236L2126,1243L2119,1253ZM1634,1256L1654,1256L1657,1279ZM1845,1259L1839,1279L1826,1278ZM1943,1258L1962,1254L1956,1278ZM2041,1262L2046,1271L2026,1275ZM2092,1260L2119,1253L2111,1276ZM2132,1256L2129,1277L2111,1276ZM1503,1270L1505,1297L1482,1287ZM1633,1279L1657,1279L1656,1288ZM1657,1279L1667,1269L1656,1288ZM1811,1270L1811,1287L1788,1290ZM1877,1273L1892,1275L1875,1289ZM1892,1275L1913,1276L1914,1294ZM2013,1280L2014,1295L1990,1287Z" fill="#1c8076"/><path d="M1471,820L1462,830L1444,837ZM1495,815L1519,830L1499,837ZM1795,813L1813,836L1788,831ZM1928,810L1949,809L1938,829ZM1971,818L1992,816L1975,835ZM2024,820L2026,834L2013,835ZM2108,818L2134,819L2127,834ZM1485,837L1499,837L1504,853ZM1547,828L1571,838L1558,854ZM1653,831L1666,837L1657,850ZM1709,828L1707,852L1689,852ZM1725,837L1741,835L1738,851ZM1725,837L1738,851L1716,845ZM1769,836L1788,831L1790,846ZM1891,838L1915,834L1903,848ZM1915,834L1923,848L1903,848ZM2098,833L2101,855L2080,850ZM1582,853L1602,864L1592,866ZM1608,849L1626,866L1602,864ZM1753,851L1753,862L1742,863ZM1858,848L1876,850L1873,866ZM2012,854L2013,868L1993,867ZM2032,848L2049,851L2044,865ZM2013,868L2014,885L1997,879ZM2013,868L2023,885L2014,885ZM2127,869L2125,879L2107,886ZM1455,879L1467,884L1455,902ZM1467,884L1464,895L1455,902ZM1639,888L1657,879L1638,901ZM1734,882L1751,878L1739,905ZM2084,883L2094,887L2099,903ZM1519,898L1532,898L1519,923ZM1786,896L1805,899L1784,917ZM1829,896L1844,922L1823,919ZM1872,900L1886,905L1879,914ZM1955,902L1957,912L1939,912ZM1473,911L1481,938L1470,936ZM1547,912L1549,929L1532,936ZM1652,912L1665,923L1653,932ZM1784,917L1807,918L1795,934ZM1470,936L1485,955L1469,955ZM1481,938L1500,930L1485,955ZM1513,930L1531,950L1518,952ZM1653,932L1669,928L1654,955ZM1795,934L1806,933L1810,953ZM1879,933L1887,940L1897,948ZM1879,933L1897,948L1872,951ZM1926,939L1942,931L1925,945ZM1978,932L1982,952L1962,956ZM1997,931L2013,952L1993,946ZM2090,930L2092,953L2080,956ZM1454,949L1469,955L1470,967ZM1454,949L1470,967L1454,973ZM1586,953L1602,957L1582,964ZM1602,957L1622,971L1604,970ZM1778,948L1793,946L1769,969ZM1810,953L1829,956L1810,972ZM1861,952L1870,963L1860,974ZM1982,952L1972,969L1961,967ZM1982,952L1993,946L1972,969ZM1993,946L2011,974L1992,970ZM2050,948L2060,948L2048,971ZM2060,948L2060,963L2048,971ZM2092,953L2116,948L2112,965ZM1506,966L1496,984L1488,985ZM1506,966L1515,987L1496,984ZM1632,968L1640,983L1624,979ZM1658,973L1648,982L1640,983ZM1810,972L1806,986L1789,988ZM1860,974L1870,963L1874,989ZM1860,974L1874,989L1852,988ZM1887,964L1896,990L1874,989ZM1907,968L1928,971L1929,990ZM1992,970L2011,974L1993,982ZM2011,974L2011,982L1993,982ZM1530,982L1547,985L1531,1002ZM1585,990L1598,983L1588,1000ZM1598,983L1601,1002L1588,1000ZM1648,982L1670,984L1651,1003ZM1721,985L1721,1002L1699,1005ZM1761,987L1751,1002L1740,1006ZM1773,980L1767,1001L1751,1002ZM1773,980L1789,988L1767,1001ZM1789,988L1806,986L1805,1001ZM1829,987L1839,1002L1826,1007ZM1929,990L1939,988L1925,1005ZM2011,982L2011,1003L1990,1000ZM2041,984L2040,997L2024,1001ZM2092,979L2093,1005L2085,999ZM1498,1005L1516,1005L1514,1014ZM1634,1003L1651,1003L1638,1016ZM1914,997L1908,1020L1890,1014ZM2060,998L2065,1023L2047,1018ZM1514,1014L1534,1038L1513,1042ZM1666,1021L1683,1014L1676,1036ZM1727,1022L1734,1021L1734,1036ZM1734,1021L1761,1041L1734,1036ZM1837,1016L1840,1033L1830,1037ZM1939,1019L1962,1018L1947,1036ZM1962,1018L1956,1031L1947,1036ZM1513,1042L1534,1038L1530,1056ZM1534,1038L1555,1033L1530,1056ZM1555,1033L1547,1056L1530,1056ZM1555,1033L1568,1034L1567,1054ZM1555,1033L1567,1054L1547,1056ZM1624,1031L1617,1051L1607,1058ZM1830,1037L1828,1049L1810,1054ZM1830,1037L1840,1033L1841,1047ZM1931,1034L1947,1036L1932,1057ZM2042,1036L2065,1037L2044,1051ZM1445,1052L1468,1057L1470,1065ZM1515,1051L1530,1056L1539,1073ZM1588,1053L1590,1071L1570,1073ZM1588,1053L1607,1058L1590,1071ZM1755,1057L1758,1067L1744,1075ZM2013,1054L2031,1053L2026,1066ZM2013,1054L2026,1066L2006,1071ZM1483,1069L1505,1086L1487,1087ZM1590,1071L1598,1087L1584,1091ZM1703,1073L1707,1082L1691,1085ZM1758,1067L1758,1081L1741,1092ZM1772,1069L1789,1064L1773,1087ZM1843,1073L1862,1075L1853,1085ZM1879,1069L1887,1085L1880,1085ZM1941,1067L1962,1073L1955,1091ZM1446,1081L1462,1088L1449,1109ZM1551,1086L1573,1084L1564,1106ZM1573,1084L1583,1106L1564,1106ZM1598,1087L1616,1102L1597,1103ZM1638,1082L1658,1108L1639,1104ZM1691,1085L1684,1104L1672,1108ZM1758,1081L1761,1109L1737,1107ZM1975,1089L1993,1091L1997,1102ZM1530,1107L1557,1099L1548,1118ZM1583,1106L1597,1119L1589,1121ZM1717,1109L1737,1107L1736,1119ZM1837,1103L1844,1119L1826,1125ZM1920,1108L1945,1101L1940,1124ZM1920,1108L1940,1124L1928,1122ZM1945,1101L1956,1126L1940,1124ZM2024,1109L2030,1123L2011,1125ZM2102,1107L2110,1103L2113,1125ZM1465,1118L1479,1116L1465,1135ZM1479,1116L1484,1139L1465,1135ZM1507,1124L1517,1139L1503,1134ZM1624,1125L1640,1124L1625,1133ZM1702,1120L1702,1138L1693,1137ZM1761,1121L1776,1143L1756,1138ZM1876,1118L1895,1140L1880,1140ZM1972,1122L1996,1124L1980,1141ZM2074,1124L2081,1138L2057,1141ZM2074,1124L2094,1121L2081,1138ZM1451,1140L1465,1135L1456,1159ZM1655,1132L1649,1151L1635,1155ZM1668,1135L1693,1137L1676,1152ZM1702,1138L1722,1134L1723,1160ZM1880,1140L1895,1140L1888,1158ZM1980,1141L1982,1154L1965,1150ZM2034,1136L2048,1143L2031,1159ZM1605,1156L1597,1167L1584,1168ZM1635,1155L1651,1170L1639,1170ZM1676,1152L1686,1159L1671,1169ZM1839,1157L1858,1150L1854,1171ZM1947,1153L1948,1170L1930,1172ZM1482,1175L1498,1171L1504,1192ZM1513,1169L1519,1189L1504,1192ZM1541,1173L1552,1174L1548,1186ZM1584,1168L1601,1188L1591,1194ZM1639,1170L1659,1194L1637,1185ZM1651,1170L1666,1189L1659,1194ZM1700,1167L1727,1173L1703,1187ZM1778,1174L1785,1171L1794,1194ZM1821,1169L1836,1172L1827,1192ZM1854,1171L1880,1177L1854,1183ZM1982,1176L1999,1175L1983,1185ZM2047,1166L2060,1170L2059,1190ZM1479,1185L1485,1207L1462,1201ZM1504,1192L1507,1207L1485,1207ZM1538,1188L1548,1186L1552,1204ZM1548,1186L1564,1183L1552,1204ZM1564,1183L1581,1211L1572,1207ZM1617,1192L1638,1201L1621,1207ZM1659,1194L1650,1209L1638,1201ZM1778,1188L1767,1207L1758,1203ZM1837,1188L1854,1183L1855,1207ZM1945,1194L1954,1202L1945,1205ZM2119,1191L2130,1190L2135,1204ZM1485,1207L1483,1218L1473,1221ZM1485,1207L1507,1207L1503,1218ZM1552,1204L1572,1207L1567,1220ZM1621,1207L1634,1226L1625,1225ZM1925,1203L1942,1218L1930,1225ZM1996,1206L1992,1228L1977,1220ZM1483,1218L1499,1246L1482,1235ZM1625,1225L1633,1235L1617,1237ZM1701,1219L1724,1218L1727,1237ZM1753,1223L1768,1224L1761,1240ZM1768,1224L1793,1238L1773,1237ZM1930,1225L1927,1246L1911,1242ZM1472,1237L1482,1235L1488,1259ZM1584,1236L1588,1252L1568,1261ZM1605,1240L1600,1258L1588,1252ZM1617,1237L1633,1235L1634,1256ZM1727,1237L1744,1240L1741,1261ZM1744,1240L1761,1240L1761,1258ZM2093,1235L2119,1253L2092,1260ZM1488,1259L1503,1270L1480,1273ZM1588,1252L1589,1273L1575,1277ZM1654,1256L1676,1258L1657,1279ZM1721,1252L1725,1277L1705,1271ZM1721,1252L1741,1261L1725,1277ZM1761,1258L1773,1272L1756,1273ZM1807,1257L1826,1278L1811,1270ZM1908,1259L1931,1271L1913,1276ZM1931,1255L1947,1273L1931,1271ZM1962,1254L1978,1271L1956,1278ZM2119,1253L2132,1256L2111,1276ZM1480,1273L1482,1287L1465,1287ZM1773,1272L1767,1288L1754,1297ZM1773,1272L1788,1290L1767,1288ZM2013,1280L2026,1290L2014,1295Z" fill="#186c63"/><path d="M1471,820L1487,820L1462,830ZM1552,812L1571,838L1547,828ZM1655,811L1665,819L1653,831ZM1752,820L1775,821L1751,831ZM1820,810L1830,831L1813,836ZM1896,815L1907,815L1891,838ZM2041,818L2065,834L2042,832ZM2067,820L2077,837L2065,834ZM1499,837L1519,830L1516,853ZM1533,828L1547,828L1539,851ZM1571,838L1569,849L1558,854ZM1682,832L1709,828L1689,852ZM1709,828L1725,837L1716,845ZM2042,832L2049,851L2032,848ZM2042,832L2065,834L2060,845ZM1569,849L1582,853L1592,866ZM1753,851L1775,844L1779,864ZM1923,848L1938,853L1920,863ZM1958,843L1965,867L1942,871ZM1995,847L2012,854L1993,867ZM2080,850L2101,855L2091,870ZM2101,855L2114,847L2091,870ZM1570,863L1563,886L1556,885ZM1592,866L1602,864L1592,889ZM1670,864L1691,870L1684,884ZM1719,871L1734,882L1723,878ZM1873,866L1871,885L1853,885ZM1522,878L1532,887L1532,898ZM1532,887L1553,898L1532,898ZM1563,886L1592,889L1568,896ZM1704,879L1710,900L1684,894ZM1751,878L1774,886L1757,899ZM1806,881L1825,883L1805,899ZM1892,888L1910,884L1907,905ZM1974,881L1997,879L1974,902ZM1997,879L1997,896L1974,902ZM2014,885L2023,885L2007,894ZM2107,886L2125,879L2132,905ZM1490,902L1505,896L1479,920ZM1590,902L1600,912L1591,912ZM1638,901L1657,899L1634,916ZM1710,900L1717,915L1704,917ZM1739,905L1757,899L1761,918ZM1739,905L1761,918L1734,918ZM1829,896L1823,919L1807,918ZM1872,900L1879,914L1856,916ZM1974,902L1997,896L1976,918ZM2099,903L2109,897L2116,918ZM1479,920L1500,912L1500,930ZM1684,917L1708,929L1689,938ZM1807,918L1823,919L1827,939ZM1856,916L1879,914L1879,933ZM1887,915L1903,935L1887,940ZM2061,915L2083,934L2061,930ZM1599,932L1624,956L1602,957ZM1669,928L1669,952L1654,955ZM1827,939L1841,940L1829,956ZM1859,929L1879,933L1872,951ZM1978,932L1997,931L1993,946ZM2049,935L2061,930L2060,948ZM2049,935L2060,948L2050,948ZM2083,934L2090,930L2080,956ZM1669,952L1690,951L1669,972ZM1843,955L1861,952L1846,973ZM1993,946L1992,970L1972,969ZM1993,946L2013,952L2011,974ZM1454,973L1470,967L1465,983ZM1785,971L1789,988L1773,980ZM1810,972L1828,971L1806,986ZM1907,968L1929,990L1908,991ZM1992,970L1993,982L1983,982ZM2099,973L2112,965L2117,991ZM2112,965L2130,970L2117,991ZM1496,984L1516,1005L1498,1005ZM1530,982L1531,1002L1516,1005ZM1547,985L1558,1004L1531,1002ZM1688,980L1702,991L1688,1004ZM1896,990L1890,998L1880,1008ZM1896,990L1908,991L1914,997ZM1939,988L1943,1001L1925,1005ZM2057,984L2085,999L2060,998ZM1480,1001L1498,1005L1489,1018ZM1531,1002L1558,1004L1546,1014ZM1721,1002L1740,1006L1727,1022ZM1740,1006L1760,1014L1734,1021ZM1767,1001L1788,1013L1776,1016ZM1788,996L1805,1001L1788,1013ZM1805,1001L1810,1019L1788,1013ZM1826,1007L1839,1002L1837,1016ZM1925,1005L1943,1001L1928,1015ZM1978,1006L1990,1000L1978,1024ZM2011,1003L2011,1019L1990,1016ZM2024,1001L2047,1018L2033,1020ZM1464,1016L1470,1034L1455,1031ZM1464,1016L1489,1018L1479,1038ZM1506,1015L1513,1042L1505,1037ZM1546,1014L1555,1033L1534,1038ZM1727,1022L1734,1036L1723,1033ZM1734,1021L1760,1014L1761,1041ZM1908,1020L1908,1038L1892,1041ZM1928,1015L1939,1019L1931,1034ZM1635,1032L1642,1049L1617,1051ZM1659,1039L1653,1052L1642,1049ZM1676,1036L1683,1035L1690,1056ZM1723,1033L1743,1055L1727,1051ZM1793,1031L1807,1031L1793,1053ZM1874,1033L1892,1053L1879,1048ZM1892,1041L1904,1049L1892,1053ZM1993,1041L2013,1054L1991,1047ZM2042,1036L2044,1051L2031,1053ZM2108,1042L2126,1032L2134,1049ZM2108,1042L2134,1049L2108,1050ZM1445,1052L1470,1065L1445,1064ZM1727,1051L1721,1066L1703,1073ZM1755,1057L1772,1069L1758,1067ZM1841,1047L1862,1075L1843,1073ZM1940,1057L1962,1052L1962,1073ZM2031,1053L2044,1051L2026,1066ZM2044,1051L2042,1064L2026,1066ZM2065,1051L2080,1056L2074,1064ZM2095,1055L2108,1050L2117,1068ZM2134,1049L2135,1065L2117,1068ZM1590,1071L1597,1075L1598,1087ZM1632,1068L1657,1086L1638,1082ZM1666,1067L1669,1091L1657,1086ZM1789,1064L1804,1086L1789,1083ZM1862,1075L1879,1069L1853,1085ZM1925,1066L1924,1084L1914,1082ZM1973,1070L1998,1068L1975,1089ZM2026,1066L2042,1064L2025,1084ZM2042,1064L2060,1087L2049,1087ZM1535,1083L1530,1107L1521,1098ZM1573,1084L1584,1091L1583,1106ZM1657,1086L1669,1091L1658,1108ZM1669,1091L1672,1108L1658,1108ZM1722,1082L1737,1107L1717,1109ZM1819,1089L1838,1084L1823,1101ZM1838,1084L1853,1085L1863,1103ZM1853,1085L1880,1085L1863,1103ZM1880,1085L1887,1085L1891,1105ZM1880,1085L1891,1105L1872,1105ZM1887,1085L1914,1082L1891,1105ZM1914,1082L1908,1101L1891,1105ZM2049,1087L2059,1104L2040,1104ZM1521,1098L1538,1118L1523,1125ZM1616,1102L1639,1104L1624,1125ZM1761,1109L1772,1108L1777,1124ZM1761,1109L1777,1124L1761,1121ZM1796,1100L1791,1119L1777,1124ZM1920,1108L1928,1122L1906,1117ZM2024,1109L2040,1104L2040,1117ZM2024,1109L2040,1117L2030,1123ZM2040,1104L2059,1104L2040,1117ZM2059,1104L2062,1122L2040,1117ZM1640,1124L1635,1140L1625,1133ZM1685,1115L1702,1120L1693,1137ZM1761,1121L1756,1138L1741,1141ZM1826,1125L1844,1119L1822,1140ZM1854,1115L1876,1118L1859,1140ZM1906,1117L1927,1133L1906,1139ZM2062,1122L2074,1124L2057,1141ZM1503,1134L1516,1158L1506,1158ZM1580,1135L1599,1137L1605,1156ZM1625,1133L1635,1140L1615,1161ZM1693,1137L1702,1138L1702,1157ZM1702,1138L1723,1160L1702,1157ZM1756,1138L1767,1150L1753,1153ZM1839,1139L1858,1150L1839,1157ZM1946,1135L1947,1153L1929,1156ZM2034,1136L2031,1159L2017,1158ZM2109,1138L2111,1150L2102,1156ZM1456,1159L1472,1172L1449,1170ZM1506,1158L1498,1171L1482,1175ZM1535,1157L1554,1159L1541,1173ZM1554,1159L1571,1172L1552,1174ZM1586,1155L1605,1156L1584,1168ZM1767,1150L1786,1153L1785,1171ZM1786,1153L1810,1160L1811,1173ZM1822,1152L1839,1157L1836,1172ZM2039,1153L2062,1160L2060,1170ZM2084,1151L2102,1156L2096,1170ZM1541,1173L1538,1188L1519,1189ZM1552,1174L1571,1172L1564,1183ZM1552,1174L1564,1183L1548,1186ZM1727,1173L1736,1175L1720,1190ZM1785,1171L1808,1190L1794,1194ZM1811,1173L1827,1192L1808,1190ZM1836,1172L1837,1188L1827,1192ZM1836,1172L1854,1171L1837,1188ZM2030,1177L2029,1192L2008,1194ZM2096,1170L2110,1171L2119,1191ZM1504,1192L1519,1189L1522,1212ZM1601,1188L1617,1192L1603,1209ZM1778,1188L1794,1194L1767,1207ZM1808,1190L1813,1203L1793,1207ZM1962,1186L1975,1208L1954,1202ZM2029,1192L2047,1205L2026,1209ZM2041,1193L2059,1190L2067,1200ZM2041,1193L2067,1200L2047,1205ZM2119,1191L2135,1204L2117,1206ZM1638,1201L1659,1224L1634,1226ZM1718,1209L1733,1221L1724,1218ZM1736,1208L1758,1203L1733,1221ZM1925,1203L1945,1205L1942,1218ZM1975,1208L1977,1220L1963,1226ZM2047,1205L2041,1219L2034,1229ZM2067,1200L2079,1210L2079,1225ZM2117,1206L2131,1222L2109,1220ZM1522,1219L1541,1242L1516,1244ZM1634,1226L1659,1224L1633,1235ZM1768,1224L1792,1221L1793,1238ZM1808,1223L1823,1234L1812,1242ZM1827,1224L1843,1224L1823,1234ZM1896,1217L1914,1224L1911,1242ZM2079,1225L2093,1235L2083,1241ZM1482,1235L1506,1260L1488,1259ZM1565,1237L1584,1236L1568,1261ZM1605,1240L1623,1254L1600,1258ZM1671,1237L1691,1237L1685,1255ZM1761,1240L1773,1237L1772,1258ZM1812,1242L1823,1234L1807,1257ZM1838,1239L1856,1254L1845,1259ZM1869,1240L1897,1245L1890,1257ZM1927,1246L1931,1255L1908,1259ZM1927,1246L1946,1240L1943,1258ZM1927,1246L1943,1258L1931,1255ZM1946,1240L1962,1254L1943,1258ZM2050,1235L2056,1253L2041,1262ZM1521,1254L1534,1256L1513,1280ZM1588,1252L1600,1258L1605,1279ZM1623,1254L1634,1256L1620,1269ZM1845,1259L1856,1254L1863,1269ZM1974,1262L1999,1274L1978,1271ZM1990,1259L2013,1280L1999,1274ZM1503,1270L1513,1280L1517,1288ZM1620,1269L1621,1289L1598,1287ZM1790,1280L1811,1270L1788,1290ZM1947,1273L1956,1278L1963,1294ZM2062,1280L2081,1271L2061,1297ZM2098,1275L2101,1297L2075,1296ZM2129,1277L2129,1287L2110,1287Z" fill="#1b7b71"/><path d="M1487,820L1485,837L1462,830ZM1487,820L1495,815L1485,837ZM1580,812L1600,820L1582,827ZM1623,811L1641,811L1619,829ZM1665,819L1666,837L1653,831ZM1711,819L1719,821L1709,828ZM1805,811L1820,810L1813,836ZM1852,817L1873,813L1874,828ZM2041,818L2067,820L2065,834ZM2077,813L2096,818L2098,833ZM2108,818L2107,833L2098,833ZM2108,818L2127,834L2107,833ZM1741,835L1753,851L1738,851ZM1769,836L1790,846L1775,844ZM1813,836L1802,845L1790,846ZM1830,831L1822,845L1802,845ZM1938,829L1963,836L1938,853ZM1997,834L2013,835L1995,847ZM2013,835L2032,848L2012,854ZM2042,832L2060,845L2049,851ZM2077,837L2080,850L2060,845ZM2098,833L2107,833L2101,855ZM1450,853L1469,853L1445,867ZM1482,851L1504,853L1486,871ZM1504,853L1500,865L1486,871ZM1504,853L1515,863L1500,865ZM1516,853L1539,851L1515,863ZM1569,849L1592,866L1570,863ZM1903,848L1923,848L1920,863ZM1468,862L1484,881L1467,884ZM1486,871L1500,865L1497,884ZM1500,865L1522,878L1497,884ZM1515,863L1532,887L1522,878ZM1541,865L1558,871L1532,887ZM1558,871L1556,885L1532,887ZM1602,864L1605,878L1592,889ZM1791,866L1809,867L1795,879ZM1873,866L1892,864L1892,888ZM1912,867L1923,884L1910,884ZM1965,867L1971,869L1960,879ZM2091,870L2115,865L2107,886ZM1467,884L1484,881L1464,895ZM1684,884L1704,879L1684,894ZM1795,879L1786,896L1773,895ZM1806,881L1805,899L1786,896ZM1825,883L1846,881L1829,896ZM1846,881L1838,897L1829,896ZM1960,879L1974,881L1955,902ZM2040,878L2063,880L2044,906ZM2084,883L2079,897L2060,898ZM2084,883L2099,903L2079,897ZM1590,902L1607,899L1600,912ZM1607,899L1619,912L1600,912ZM1624,900L1638,901L1619,912ZM1657,899L1652,912L1634,916ZM1725,894L1739,905L1734,918ZM1907,905L1928,902L1930,915ZM2060,898L2061,915L2043,912ZM2060,898L2079,897L2061,915ZM1479,920L1500,930L1481,938ZM1519,923L1535,915L1513,930ZM1535,915L1547,912L1532,936ZM1665,923L1684,917L1689,938ZM1717,915L1742,933L1722,930ZM1734,918L1761,918L1742,933ZM1856,916L1879,933L1859,929ZM2129,921L2135,930L2108,937ZM1452,939L1469,955L1454,949ZM1500,930L1500,945L1485,955ZM1500,930L1513,930L1500,945ZM1638,931L1653,932L1654,955ZM1669,928L1689,938L1690,951ZM1722,930L1742,933L1740,954ZM1761,938L1768,932L1759,949ZM2009,931L2034,938L2031,949ZM1485,955L1500,945L1506,966ZM1624,956L1632,968L1622,971ZM1639,953L1658,973L1632,968ZM1793,946L1810,953L1810,972ZM1793,946L1810,972L1785,971ZM1872,951L1897,948L1887,964ZM1942,947L1962,956L1938,967ZM2060,948L2080,956L2079,966ZM2080,956L2092,953L2079,966ZM1541,964L1546,963L1530,982ZM1582,964L1598,983L1585,990ZM1828,971L1829,987L1806,986ZM1828,971L1843,979L1829,987ZM1938,967L1961,967L1939,988ZM2011,974L2033,963L2011,982ZM2060,963L2079,966L2084,990ZM2099,973L2092,979L2084,990ZM1465,983L1480,1001L1472,996ZM1496,984L1515,987L1516,1005ZM1575,985L1564,997L1558,1004ZM1624,979L1621,1008L1601,1002ZM1670,984L1674,998L1651,1003ZM1761,987L1773,980L1751,1002ZM1829,987L1826,1007L1805,1001ZM1929,990L1925,1005L1914,997ZM1621,1008L1634,1003L1638,1016ZM1674,998L1683,1014L1666,1021ZM1767,1001L1788,996L1788,1013ZM1880,1008L1890,998L1890,1014ZM1914,997L1925,1005L1928,1015ZM1965,1000L1978,1006L1962,1018ZM2085,999L2077,1014L2065,1023ZM2093,1005L2093,1017L2077,1014ZM1705,1021L1727,1022L1723,1033ZM2011,1019L2012,1036L1993,1041ZM2011,1019L2033,1020L2012,1036ZM2065,1023L2075,1032L2065,1037ZM2093,1017L2098,1039L2075,1032ZM1470,1034L1468,1057L1445,1052ZM1581,1031L1606,1035L1588,1053ZM1874,1033L1879,1048L1861,1056ZM1982,1036L1991,1047L1979,1050ZM1515,1051L1539,1073L1518,1064ZM1617,1051L1626,1066L1597,1075ZM1677,1049L1682,1069L1666,1067ZM1727,1051L1744,1075L1721,1066ZM2095,1055L2117,1068L2097,1075ZM1539,1073L1553,1074L1551,1086ZM1553,1074L1570,1073L1551,1086ZM1570,1073L1590,1071L1573,1084ZM1626,1066L1632,1068L1617,1089ZM1632,1068L1638,1082L1617,1089ZM1789,1064L1806,1073L1804,1086ZM1806,1073L1826,1074L1804,1086ZM1914,1073L1925,1066L1914,1082ZM2117,1068L2129,1083L2114,1086ZM1945,1087L1945,1101L1920,1108ZM2083,1088L2095,1089L2074,1101ZM1465,1102L1485,1105L1479,1116ZM1564,1106L1583,1106L1564,1117ZM1639,1104L1658,1108L1640,1124ZM1872,1105L1876,1118L1854,1115ZM1891,1105L1886,1119L1876,1118ZM1977,1109L1972,1122L1956,1126ZM2009,1105L2024,1109L2011,1125ZM1479,1116L1507,1124L1503,1134ZM1479,1116L1503,1134L1484,1139ZM1507,1124L1523,1125L1517,1139ZM1876,1118L1880,1140L1859,1140ZM1876,1118L1886,1119L1895,1140ZM1940,1124L1956,1126L1946,1135ZM1956,1126L1960,1138L1946,1135ZM1972,1122L1980,1141L1960,1138ZM2030,1123L2040,1117L2034,1136ZM2113,1125L2128,1122L2109,1138ZM2128,1122L2131,1140L2109,1138ZM1569,1136L1580,1135L1586,1155ZM1741,1141L1756,1138L1753,1153ZM1741,1141L1753,1153L1739,1153ZM1756,1138L1776,1143L1767,1150ZM1880,1140L1875,1152L1858,1150ZM1895,1140L1906,1139L1888,1158ZM1906,1139L1927,1133L1929,1156ZM1980,1141L1988,1152L1982,1154ZM2048,1143L2039,1153L2031,1159ZM1456,1159L1471,1150L1472,1172ZM1483,1160L1482,1175L1472,1172ZM1516,1158L1535,1157L1513,1169ZM1535,1157L1541,1173L1513,1169ZM1723,1160L1739,1153L1736,1175ZM1810,1160L1821,1169L1811,1173ZM1929,1156L1947,1153L1930,1172ZM1947,1153L1965,1150L1948,1170ZM1988,1152L1999,1175L1982,1176ZM2017,1158L2006,1169L1999,1175ZM1482,1175L1504,1192L1479,1185ZM1619,1166L1639,1170L1617,1192ZM1736,1175L1758,1189L1739,1189ZM1930,1172L1948,1170L1924,1188ZM1519,1189L1538,1188L1522,1212ZM1591,1194L1601,1188L1581,1211ZM1666,1189L1685,1191L1669,1202ZM1758,1189L1778,1188L1758,1203ZM1794,1194L1808,1190L1793,1207ZM1889,1183L1903,1191L1911,1208ZM1924,1188L1945,1194L1945,1205ZM2008,1194L2015,1204L1996,1206ZM2008,1194L2026,1209L2015,1204ZM2029,1192L2041,1193L2047,1205ZM2093,1187L2119,1191L2117,1206ZM1462,1201L1473,1221L1452,1225ZM1522,1212L1535,1205L1531,1228ZM1552,1204L1552,1226L1531,1228ZM1669,1202L1692,1209L1668,1224ZM1692,1209L1693,1224L1668,1224ZM1718,1209L1736,1208L1733,1221ZM1813,1203L1827,1224L1808,1223ZM1876,1211L1893,1206L1896,1217ZM1876,1211L1896,1217L1870,1227ZM1911,1208L1914,1224L1896,1217ZM1911,1208L1925,1203L1930,1225ZM1954,1202L1963,1226L1942,1218ZM1668,1224L1693,1224L1691,1237ZM1701,1219L1709,1245L1691,1237ZM1792,1221L1808,1223L1812,1242ZM1808,1223L1827,1224L1823,1234ZM1914,1224L1930,1225L1911,1242ZM1977,1220L1992,1242L1978,1241ZM2011,1220L2034,1229L2034,1246ZM2109,1220L2131,1222L2110,1236ZM1455,1236L1472,1237L1468,1253ZM1516,1244L1521,1254L1506,1260ZM1548,1239L1565,1237L1568,1261ZM1633,1235L1654,1256L1634,1256ZM1812,1242L1807,1257L1791,1253ZM1838,1239L1856,1241L1856,1254ZM1978,1241L1974,1262L1962,1254ZM2050,1235L2057,1238L2056,1253ZM1446,1253L1468,1253L1456,1275ZM1468,1253L1472,1276L1456,1275ZM1468,1253L1488,1259L1472,1276ZM1488,1259L1480,1273L1472,1276ZM1551,1262L1568,1261L1575,1277ZM1551,1262L1575,1277L1547,1276ZM1634,1256L1657,1279L1633,1279ZM1705,1253L1705,1271L1690,1273ZM1705,1253L1721,1252L1705,1271ZM1845,1259L1863,1269L1839,1279ZM1908,1259L1931,1255L1931,1271ZM1943,1258L1956,1278L1947,1273ZM1990,1259L2008,1257L2013,1280ZM1547,1276L1549,1289L1540,1295ZM1547,1276L1575,1277L1569,1287ZM1633,1279L1642,1297L1621,1289ZM1667,1269L1674,1289L1656,1288ZM1773,1272L1790,1280L1788,1290ZM1811,1270L1819,1285L1811,1287ZM1826,1278L1839,1279L1839,1294ZM1913,1276L1921,1287L1914,1294ZM2081,1271L2075,1296L2061,1297Z" fill="#197269"/><path d="M1523,817L1540,810L1533,828ZM1552,812L1570,816L1571,838ZM1641,811L1655,811L1638,836ZM1665,819L1685,812L1666,837ZM1711,819L1709,828L1682,832ZM1719,821L1725,837L1709,828ZM1719,821L1739,817L1741,835ZM1719,821L1741,835L1725,837ZM1795,813L1788,831L1769,836ZM1839,816L1841,835L1830,831ZM1907,815L1915,834L1891,838ZM1928,810L1938,829L1926,830ZM1971,818L1975,835L1963,836ZM2067,820L2077,813L2077,837ZM1462,830L1469,853L1450,853ZM1638,836L1653,831L1640,845ZM1741,835L1751,831L1753,851ZM1751,831L1769,836L1775,844ZM1788,831L1813,836L1790,846ZM1841,835L1858,829L1837,843ZM1963,836L1958,843L1938,853ZM2013,835L2026,834L2032,848ZM2026,834L2042,832L2032,848ZM2077,837L2098,833L2080,850ZM1558,854L1569,849L1558,871ZM1608,849L1622,852L1626,866ZM1622,852L1634,866L1626,866ZM1640,845L1649,867L1634,866ZM1657,850L1670,864L1649,867ZM1673,848L1689,852L1691,870ZM1716,845L1738,851L1742,863ZM1790,846L1809,867L1791,866ZM1802,845L1827,861L1809,867ZM1822,845L1837,843L1844,864ZM1837,843L1858,848L1844,864ZM1858,848L1873,866L1858,864ZM1889,854L1892,864L1873,866ZM1889,854L1912,867L1892,864ZM1958,843L1971,869L1965,867ZM1978,844L1993,867L1971,869ZM2012,854L2032,848L2028,871ZM2049,851L2060,845L2066,862ZM2060,845L2080,850L2066,862ZM2080,850L2091,870L2077,870ZM2114,847L2135,843L2115,865ZM1468,862L1467,884L1455,879ZM1486,871L1497,884L1484,881ZM1626,866L1634,866L1624,880ZM1634,866L1657,879L1639,888ZM1670,864L1684,884L1669,888ZM1699,866L1719,871L1723,878ZM1699,866L1723,878L1704,879ZM1779,864L1791,866L1774,886ZM1809,867L1827,861L1825,883ZM1809,867L1825,883L1806,881ZM1827,861L1846,881L1825,883ZM1844,864L1858,864L1846,881ZM1858,864L1853,885L1846,881ZM1892,864L1912,867L1892,888ZM1942,871L1940,886L1923,884ZM1942,871L1960,879L1940,886ZM1971,869L1993,867L1997,879ZM1971,869L1997,879L1974,881ZM2044,865L2066,862L2063,880ZM2066,862L2084,883L2063,880ZM2115,865L2127,869L2107,886ZM1497,884L1522,878L1505,896ZM1522,878L1532,898L1519,898ZM1532,887L1556,885L1553,898ZM1592,889L1590,902L1568,896ZM1592,889L1605,878L1607,899ZM1624,880L1638,901L1624,900ZM1657,879L1669,888L1666,894ZM1669,888L1684,884L1684,894ZM1751,878L1757,899L1739,905ZM1871,885L1886,905L1872,900ZM1910,884L1923,884L1928,902ZM1974,881L1974,902L1955,902ZM2063,880L2060,898L2044,906ZM2107,886L2109,897L2099,903ZM1464,895L1473,911L1452,916ZM1505,896L1500,912L1479,920ZM1505,896L1519,898L1519,923ZM1505,896L1519,923L1500,912ZM1638,901L1634,916L1619,912ZM1773,895L1786,896L1777,914ZM1786,896L1784,917L1777,914ZM1805,899L1829,896L1807,918ZM1886,905L1887,915L1879,914ZM1943,905L1955,902L1939,912ZM2007,894L2025,895L2013,912ZM2025,895L2024,914L2013,912ZM2079,897L2082,918L2061,915ZM2079,897L2099,903L2082,918ZM1452,916L1473,911L1452,939ZM1500,912L1519,923L1513,930ZM1500,912L1513,930L1500,930ZM1535,915L1532,936L1513,930ZM1574,917L1572,935L1549,929ZM1574,917L1591,912L1572,935ZM1619,912L1634,916L1638,931ZM1652,912L1653,932L1638,931ZM1665,923L1689,938L1669,928ZM1684,917L1704,917L1708,929ZM1704,917L1722,930L1708,929ZM1807,918L1806,933L1795,934ZM1823,919L1844,922L1841,940ZM1976,918L1978,932L1957,930ZM1976,918L1991,912L1997,931ZM2024,914L2034,938L2009,931ZM2024,914L2043,912L2049,935ZM2024,914L2049,935L2034,938ZM2101,919L2090,930L2083,934ZM1532,936L1550,945L1531,950ZM1549,929L1572,935L1567,950ZM1599,932L1602,957L1586,953ZM1722,930L1717,949L1702,946ZM1768,932L1778,948L1759,949ZM1768,932L1795,934L1778,948ZM1841,940L1843,955L1829,956ZM1841,940L1859,929L1843,955ZM1887,940L1915,952L1897,948ZM1903,935L1926,939L1915,952ZM1942,931L1957,930L1942,947ZM1957,930L1962,956L1942,947ZM1957,930L1978,932L1962,956ZM2009,931L2031,949L2013,952ZM2034,938L2049,935L2050,948ZM2061,930L2083,934L2080,956ZM1469,955L1485,955L1470,967ZM1550,945L1570,969L1546,963ZM1567,950L1586,953L1582,964ZM1690,951L1702,946L1690,973ZM1717,949L1734,964L1726,968ZM1759,949L1778,948L1769,969ZM1793,946L1785,971L1769,969ZM1829,956L1846,973L1828,971ZM1861,952L1860,974L1846,973ZM1861,952L1872,951L1870,963ZM1897,948L1915,952L1907,968ZM1915,952L1928,971L1907,968ZM1962,956L1961,967L1938,967ZM2092,953L2112,965L2099,973ZM2116,948L2130,970L2112,965ZM1483,968L1506,966L1488,985ZM1570,969L1582,964L1585,990ZM1669,972L1670,984L1648,982ZM1690,973L1702,970L1688,980ZM1702,970L1702,991L1688,980ZM1702,970L1726,968L1721,985ZM1734,964L1734,982L1721,985ZM1752,963L1761,987L1734,982ZM1752,963L1769,969L1761,987ZM1769,969L1773,980L1761,987ZM1887,964L1907,968L1896,990ZM1907,968L1908,991L1896,990ZM1972,969L1992,970L1983,982ZM2033,963L2030,980L2011,982ZM2048,971L2057,984L2041,984ZM2079,966L2099,973L2084,990ZM2130,970L2131,981L2117,991ZM1453,986L1472,996L1447,1007ZM1515,987L1530,982L1516,1005ZM1598,983L1624,979L1601,1002ZM1624,979L1634,1003L1621,1008ZM1640,983L1648,982L1651,1003ZM1874,989L1880,1008L1861,1007ZM1874,989L1896,990L1880,1008ZM1959,991L1978,1006L1965,1000ZM2057,984L2084,990L2085,999ZM1498,1005L1506,1015L1489,1018ZM1516,1005L1538,1020L1514,1014ZM1564,997L1590,1013L1573,1019ZM1588,1000L1601,1002L1604,1014ZM1588,1000L1604,1014L1590,1013ZM1651,1003L1659,1014L1638,1016ZM1651,1003L1666,1021L1659,1014ZM1674,998L1688,1004L1683,1014ZM1688,1004L1699,1005L1705,1021ZM1805,1001L1829,1019L1810,1019ZM1826,1007L1837,1016L1829,1019ZM1839,1002L1855,1024L1837,1016ZM1880,1008L1871,1014L1855,1024ZM1914,997L1928,1015L1908,1020ZM1943,1001L1965,1000L1962,1018ZM1943,1001L1962,1018L1939,1019ZM2011,1003L2033,1020L2011,1019ZM1464,1016L1479,1038L1470,1034ZM1506,1015L1514,1014L1513,1042ZM1590,1013L1606,1035L1581,1031ZM1623,1020L1624,1031L1606,1035ZM1623,1020L1635,1032L1624,1031ZM1638,1016L1659,1014L1635,1032ZM1659,1014L1666,1021L1676,1036ZM1705,1021L1702,1030L1683,1035ZM1760,1014L1776,1016L1761,1041ZM1776,1016L1788,1013L1773,1031ZM1788,1013L1807,1031L1793,1031ZM1810,1019L1829,1019L1830,1037ZM1855,1024L1874,1033L1859,1042ZM1908,1020L1931,1034L1908,1038ZM1962,1018L1978,1024L1956,1031ZM1978,1024L1990,1016L1993,1041ZM1978,1024L1993,1041L1982,1036ZM2033,1020L2047,1018L2025,1039ZM2093,1017L2118,1016L2098,1039ZM1470,1034L1479,1038L1468,1057ZM1606,1035L1607,1058L1588,1053ZM1606,1035L1624,1031L1607,1058ZM1683,1035L1702,1030L1690,1056ZM1702,1030L1723,1033L1727,1051ZM1723,1033L1734,1036L1743,1055ZM1773,1031L1775,1051L1755,1057ZM1830,1037L1841,1047L1828,1049ZM1859,1042L1874,1033L1861,1056ZM1892,1041L1908,1038L1904,1049ZM1956,1031L1982,1036L1962,1052ZM1982,1036L1979,1050L1962,1052ZM1982,1036L1993,1041L1991,1047ZM1993,1041L2012,1036L2013,1054ZM2025,1039L2042,1036L2031,1053ZM2065,1037L2080,1056L2065,1051ZM1530,1056L1547,1056L1539,1073ZM1547,1056L1567,1054L1553,1074ZM1642,1049L1649,1068L1632,1068ZM1677,1049L1690,1056L1682,1069ZM1690,1056L1708,1047L1703,1073ZM1727,1051L1743,1055L1744,1075ZM1743,1055L1755,1057L1744,1075ZM1775,1051L1789,1064L1772,1069ZM1793,1053L1810,1054L1806,1073ZM1810,1054L1828,1049L1826,1074ZM1892,1053L1904,1049L1914,1073ZM1904,1049L1925,1066L1914,1073ZM1932,1057L1940,1057L1941,1067ZM1962,1052L1979,1050L1973,1070ZM1991,1047L1998,1068L1973,1070ZM2108,1050L2134,1049L2117,1068ZM1470,1065L1483,1069L1462,1088ZM1483,1069L1505,1070L1505,1086ZM1518,1064L1539,1073L1523,1088ZM1649,1068L1666,1067L1657,1086ZM1666,1067L1691,1085L1669,1091ZM1682,1069L1703,1073L1691,1085ZM1721,1066L1741,1092L1722,1082ZM1758,1067L1773,1087L1758,1081ZM1843,1073L1853,1085L1838,1084ZM1894,1072L1914,1073L1887,1085ZM1925,1066L1941,1067L1945,1087ZM1998,1068L1993,1091L1975,1089ZM1998,1068L2006,1071L1993,1091ZM2026,1066L2025,1084L2006,1084ZM2058,1069L2074,1064L2060,1087ZM2117,1068L2114,1086L2095,1089ZM1462,1088L1465,1102L1449,1109ZM1505,1086L1497,1103L1485,1105ZM1535,1083L1551,1086L1530,1107ZM1584,1091L1598,1087L1597,1103ZM1638,1082L1657,1086L1658,1108ZM1669,1091L1691,1085L1672,1108ZM1691,1085L1707,1082L1684,1104ZM1707,1082L1722,1082L1703,1105ZM1722,1082L1717,1109L1703,1105ZM1789,1083L1796,1100L1772,1108ZM1804,1086L1823,1101L1810,1107ZM1914,1082L1924,1084L1920,1108ZM1993,1091L2006,1084L1997,1102ZM2006,1084L2009,1105L1997,1102ZM2025,1084L2024,1109L2009,1105ZM2060,1087L2083,1088L2059,1104ZM2095,1089L2110,1103L2102,1107ZM1465,1102L1479,1116L1465,1118ZM1485,1105L1497,1103L1507,1124ZM1521,1098L1530,1107L1538,1118ZM1530,1107L1548,1118L1538,1118ZM1583,1106L1589,1121L1564,1117ZM1597,1103L1616,1102L1597,1119ZM1703,1105L1717,1109L1717,1116ZM1737,1107L1761,1109L1736,1119ZM1761,1109L1761,1121L1736,1119ZM1823,1101L1837,1103L1826,1125ZM1837,1103L1863,1103L1844,1119ZM1908,1101L1906,1117L1886,1119ZM1945,1101L1960,1105L1956,1126ZM1960,1105L1977,1109L1956,1126ZM1997,1102L2009,1105L2011,1125ZM1997,1102L2011,1125L1996,1124ZM2059,1104L2074,1101L2062,1122ZM2074,1101L2074,1124L2062,1122ZM2102,1107L2094,1121L2074,1124ZM2110,1103L2124,1099L2113,1125ZM1446,1127L1465,1135L1451,1140ZM1523,1125L1538,1118L1531,1133ZM1538,1118L1548,1118L1531,1133ZM1589,1121L1597,1119L1580,1135ZM1597,1119L1599,1137L1580,1135ZM1597,1119L1624,1125L1625,1133ZM1659,1122L1670,1122L1668,1135ZM1717,1116L1736,1119L1741,1141ZM1717,1116L1741,1141L1722,1134ZM1826,1125L1822,1140L1807,1140ZM1844,1119L1839,1139L1822,1140ZM1844,1119L1854,1115L1859,1140ZM1844,1119L1859,1140L1839,1139ZM1956,1126L1972,1122L1960,1138ZM1996,1124L1994,1143L1980,1141ZM1996,1124L2010,1139L1994,1143ZM2011,1125L2034,1136L2010,1139ZM2040,1117L2062,1122L2048,1143ZM2094,1121L2113,1125L2109,1138ZM1465,1135L1484,1139L1483,1160ZM1465,1135L1483,1160L1471,1150ZM1517,1139L1531,1133L1516,1158ZM1569,1136L1586,1155L1572,1161ZM1635,1140L1635,1155L1615,1161ZM1635,1140L1655,1132L1635,1155ZM1655,1132L1676,1152L1649,1151ZM1693,1137L1702,1157L1686,1159ZM1722,1134L1741,1141L1739,1153ZM1776,1143L1786,1153L1767,1150ZM1807,1140L1810,1160L1786,1153ZM1906,1139L1904,1154L1888,1158ZM1906,1139L1929,1156L1904,1154ZM1960,1138L1980,1141L1965,1150ZM1994,1143L2010,1139L1988,1152ZM2010,1139L2034,1136L2017,1158ZM2057,1141L2062,1160L2039,1153ZM2057,1141L2081,1138L2084,1151ZM1483,1160L1506,1158L1482,1175ZM1506,1158L1513,1169L1498,1171ZM1615,1161L1619,1166L1597,1167ZM1635,1155L1649,1151L1651,1170ZM1702,1157L1727,1173L1700,1167ZM1739,1153L1753,1153L1751,1177ZM1739,1153L1751,1177L1736,1175ZM1786,1153L1811,1173L1785,1171ZM1858,1150L1880,1177L1854,1171ZM1965,1150L1966,1170L1948,1170ZM1965,1150L1982,1154L1966,1170ZM1982,1154L1988,1152L1982,1176ZM2039,1153L2047,1166L2030,1177ZM2039,1153L2060,1170L2047,1166ZM2084,1151L2075,1169L2060,1170ZM2084,1151L2096,1170L2075,1169ZM2111,1150L2110,1171L2096,1170ZM1692,1172L1700,1167L1685,1191ZM1854,1171L1854,1183L1837,1188ZM1905,1177L1930,1172L1903,1191ZM1948,1170L1962,1186L1945,1194ZM1966,1170L1982,1176L1962,1186ZM1999,1175L2006,1169L1995,1191ZM2006,1169L2008,1194L1995,1191ZM2006,1169L2030,1177L2008,1194ZM2030,1177L2047,1166L2041,1193ZM2030,1177L2041,1193L2029,1192ZM2047,1166L2059,1190L2041,1193ZM2110,1171L2135,1173L2119,1191ZM1453,1194L1461,1194L1462,1201ZM1453,1194L1462,1201L1452,1203ZM1461,1194L1479,1185L1462,1201ZM1538,1188L1535,1205L1522,1212ZM1538,1188L1552,1204L1535,1205ZM1617,1192L1637,1185L1638,1201ZM1758,1189L1758,1203L1736,1208ZM1837,1188L1842,1204L1827,1205ZM1945,1194L1962,1186L1954,1202ZM2059,1190L2082,1187L2067,1200ZM2082,1187L2093,1187L2079,1210ZM1462,1201L1485,1207L1473,1221ZM1485,1207L1503,1218L1483,1218ZM1572,1207L1581,1211L1584,1229ZM1572,1207L1584,1229L1567,1220ZM1603,1209L1621,1207L1625,1225ZM1638,1201L1650,1209L1659,1224ZM1692,1209L1701,1219L1693,1224ZM1767,1207L1793,1207L1792,1221ZM1767,1207L1792,1221L1768,1224ZM1793,1207L1808,1223L1792,1221ZM1827,1205L1842,1204L1843,1224ZM1827,1205L1843,1224L1827,1224ZM1945,1205L1954,1202L1942,1218ZM1996,1206L2015,1204L1992,1228ZM2026,1209L2047,1205L2034,1229ZM2047,1205L2065,1222L2041,1219ZM2067,1200L2079,1225L2065,1222ZM1483,1218L1503,1218L1499,1246ZM1599,1228L1625,1225L1605,1240ZM1625,1225L1634,1226L1633,1235ZM1659,1224L1653,1235L1633,1235ZM1668,1224L1671,1237L1653,1235ZM1701,1219L1727,1237L1709,1245ZM1724,1218L1733,1221L1727,1237ZM1733,1221L1753,1223L1761,1240ZM1843,1224L1838,1239L1823,1234ZM1862,1218L1870,1227L1869,1240ZM1942,1218L1963,1226L1960,1245ZM1992,1228L2011,1245L1992,1242ZM2011,1220L2034,1246L2011,1245ZM2034,1229L2041,1219L2050,1235ZM2041,1219L2065,1222L2050,1235ZM2065,1222L2057,1238L2050,1235ZM2109,1220L2110,1236L2093,1235ZM1455,1236L1468,1253L1446,1253ZM1499,1246L1516,1244L1506,1260ZM1541,1242L1548,1239L1534,1256ZM1548,1239L1551,1262L1534,1256ZM1584,1236L1605,1240L1588,1252ZM1671,1237L1676,1258L1654,1256ZM1671,1237L1685,1255L1676,1258ZM1709,1245L1727,1237L1705,1253ZM1727,1237L1721,1252L1705,1253ZM1823,1234L1845,1259L1820,1256ZM1856,1241L1869,1240L1856,1254ZM1897,1245L1908,1259L1890,1257ZM1911,1242L1927,1246L1908,1259ZM2093,1235L2110,1236L2119,1253ZM1488,1259L1506,1260L1503,1270ZM1534,1256L1547,1276L1540,1276ZM1676,1258L1667,1269L1657,1279ZM1685,1255L1705,1253L1690,1273ZM1761,1258L1756,1273L1742,1273ZM1761,1258L1772,1258L1773,1272ZM1807,1257L1820,1256L1826,1278ZM1820,1256L1845,1259L1826,1278ZM1877,1258L1877,1273L1863,1269ZM1890,1257L1908,1259L1892,1275ZM1908,1259L1913,1276L1892,1275ZM2008,1257L2027,1254L2013,1280ZM2027,1254L2026,1275L2013,1280ZM2027,1254L2041,1262L2026,1275ZM2041,1262L2056,1253L2046,1271ZM2056,1253L2082,1255L2062,1280ZM2092,1260L2111,1276L2098,1275ZM1456,1275L1465,1287L1449,1295ZM1472,1276L1480,1273L1465,1287ZM1575,1277L1589,1273L1569,1287ZM1589,1273L1605,1279L1583,1290ZM1620,1269L1633,1279L1621,1289ZM1633,1279L1656,1288L1642,1297ZM1725,1277L1742,1273L1737,1287ZM1756,1273L1773,1272L1754,1297ZM1826,1278L1839,1294L1819,1285ZM1877,1273L1875,1289L1857,1293ZM1892,1275L1914,1294L1891,1285ZM1931,1271L1947,1273L1921,1287ZM1947,1273L1946,1291L1921,1287ZM1978,1271L1999,1274L1973,1295ZM1999,1274L2013,1280L1990,1287ZM2026,1275L2046,1271L2048,1289ZM2026,1275L2048,1289L2026,1290ZM2046,1271L2062,1280L2048,1289Z" fill="#1c7e74"/><path d="M1523,817L1533,828L1519,830ZM1540,810L1552,812L1533,828ZM1570,816L1580,812L1582,827ZM1600,820L1609,832L1582,827ZM1641,811L1638,836L1619,829ZM1795,813L1805,811L1813,836ZM1839,816L1852,817L1841,835ZM1852,817L1874,828L1858,829ZM1963,819L1963,836L1938,829ZM1963,819L1971,818L1963,836ZM1444,837L1462,830L1450,853ZM1462,830L1485,837L1469,853ZM1519,830L1533,828L1539,851ZM1609,832L1619,829L1622,852ZM1751,831L1775,844L1753,851ZM1963,836L1975,835L1978,844ZM2107,833L2114,847L2101,855ZM1504,853L1516,853L1515,863ZM1539,851L1558,854L1558,871ZM1582,853L1608,849L1602,864ZM1657,850L1673,848L1670,864ZM1689,852L1707,852L1699,866ZM1802,845L1822,845L1827,861ZM1938,853L1958,843L1942,871ZM2012,854L2028,871L2013,868ZM2114,847L2115,865L2091,870ZM1445,867L1468,862L1455,879ZM1827,861L1844,864L1846,881ZM1873,866L1892,888L1871,885ZM1942,871L1965,867L1960,879ZM1592,889L1607,899L1590,902ZM1723,878L1734,882L1739,905ZM1795,879L1806,881L1786,896ZM1853,885L1872,900L1854,897ZM1940,886L1943,905L1928,902ZM1940,886L1955,902L1943,905ZM2023,885L2025,895L2007,894ZM1464,895L1490,902L1479,920ZM1532,898L1553,898L1535,915ZM1657,899L1665,923L1652,912ZM1725,894L1734,918L1717,915ZM1854,897L1872,900L1856,916ZM1886,905L1904,920L1887,915ZM1928,902L1939,912L1930,915ZM1955,902L1974,902L1957,912ZM2099,903L2101,919L2082,918ZM2109,897L2129,921L2116,918ZM1591,912L1580,929L1572,935ZM1600,912L1619,912L1599,932ZM1665,923L1669,928L1653,932ZM1761,918L1761,938L1742,933ZM1761,918L1777,914L1768,932ZM1823,919L1841,940L1827,939ZM1844,922L1856,916L1859,929ZM1904,920L1930,915L1926,939ZM1930,915L1942,931L1926,939ZM1939,912L1957,912L1942,931ZM1957,912L1976,918L1957,930ZM1976,918L1997,931L1978,932ZM2082,918L2101,919L2083,934ZM2101,919L2116,918L2090,930ZM1452,939L1470,936L1469,955ZM1513,930L1518,952L1500,945ZM1532,936L1549,929L1550,945ZM1549,929L1567,950L1550,945ZM1572,935L1580,929L1586,953ZM1638,931L1654,955L1639,953ZM1795,934L1793,946L1778,948ZM1859,929L1861,952L1843,955ZM1500,945L1518,952L1515,969ZM1740,954L1759,949L1734,964ZM2031,949L2050,948L2048,971ZM2060,948L2079,966L2060,963ZM1546,963L1547,985L1530,982ZM1546,963L1570,969L1575,985ZM1669,972L1688,980L1670,984ZM1785,971L1810,972L1789,988ZM1928,971L1938,967L1929,990ZM1961,967L1959,991L1939,988ZM2060,963L2084,990L2057,984ZM1453,986L1465,983L1472,996ZM1488,985L1496,984L1498,1005ZM1721,985L1740,1006L1721,1002ZM1789,988L1805,1001L1788,996ZM1829,987L1843,979L1839,1002ZM1852,988L1874,989L1861,1007ZM2011,982L2024,1001L2011,1003ZM2030,980L2041,984L2024,1001ZM1472,996L1480,1001L1489,1018ZM1699,1005L1727,1022L1705,1021ZM1943,1001L1939,1019L1928,1015ZM1978,1006L1978,1024L1962,1018ZM1990,1000L2011,1003L1990,1016ZM2060,998L2085,999L2065,1023ZM1514,1014L1538,1020L1534,1038ZM1546,1014L1573,1019L1568,1034ZM1659,1014L1676,1036L1659,1039ZM1683,1014L1683,1035L1676,1036ZM1829,1019L1837,1016L1830,1037ZM1890,1014L1892,1041L1874,1033ZM1990,1016L2011,1019L1993,1041ZM2065,1023L2077,1014L2075,1032ZM1513,1042L1515,1051L1496,1054ZM1624,1031L1635,1032L1617,1051ZM1676,1036L1677,1049L1653,1052ZM1676,1036L1690,1056L1677,1049ZM1702,1030L1727,1051L1708,1047ZM1773,1031L1793,1031L1775,1051ZM1793,1031L1793,1053L1775,1051ZM1908,1038L1931,1034L1904,1049ZM1931,1034L1932,1057L1904,1049ZM1947,1036L1940,1057L1932,1057ZM2065,1037L2065,1051L2044,1051ZM2075,1032L2098,1039L2095,1055ZM1468,1057L1480,1055L1470,1065ZM1480,1055L1483,1069L1470,1065ZM1690,1056L1703,1073L1682,1069ZM1708,1047L1727,1051L1703,1073ZM1793,1053L1806,1073L1789,1064ZM1828,1049L1841,1047L1826,1074ZM1879,1048L1879,1069L1862,1075ZM2095,1055L2097,1075L2074,1064ZM1470,1065L1462,1088L1446,1081ZM1505,1070L1523,1088L1505,1086ZM1539,1073L1551,1086L1535,1083ZM1570,1073L1573,1084L1551,1086ZM1590,1071L1584,1091L1573,1084ZM1626,1066L1617,1089L1598,1087ZM1632,1068L1649,1068L1657,1086ZM1758,1067L1772,1069L1773,1087ZM1789,1064L1789,1083L1773,1087ZM1914,1073L1914,1082L1887,1085ZM1925,1066L1945,1087L1924,1084ZM2006,1071L2006,1084L1993,1091ZM2042,1064L2058,1069L2060,1087ZM1462,1088L1487,1087L1485,1105ZM1598,1087L1617,1089L1616,1102ZM1758,1081L1773,1087L1761,1109ZM1773,1087L1789,1083L1772,1108ZM1945,1087L1955,1091L1945,1101ZM1955,1091L1960,1105L1945,1101ZM2095,1089L2114,1086L2110,1103ZM1583,1106L1597,1103L1597,1119ZM1658,1108L1672,1108L1659,1122ZM1823,1101L1826,1125L1806,1119ZM1446,1127L1465,1118L1465,1135ZM1548,1118L1564,1117L1557,1132ZM1640,1124L1659,1122L1655,1132ZM1777,1124L1791,1119L1776,1143ZM1791,1119L1791,1133L1776,1143ZM1791,1119L1806,1119L1791,1133ZM1940,1124L1946,1135L1927,1133ZM1693,1137L1686,1159L1676,1152ZM1880,1140L1888,1158L1875,1152ZM1980,1141L1994,1143L1988,1152ZM2048,1143L2057,1141L2039,1153ZM1471,1150L1483,1160L1472,1172ZM1572,1161L1586,1155L1584,1168ZM1605,1156L1615,1161L1597,1167ZM1615,1161L1635,1155L1619,1166ZM1635,1155L1639,1170L1619,1166ZM1686,1159L1692,1172L1671,1169ZM1686,1159L1702,1157L1700,1167ZM1888,1158L1892,1175L1880,1177ZM1982,1154L1982,1176L1966,1170ZM1472,1172L1461,1194L1453,1194ZM1541,1173L1548,1186L1538,1188ZM1571,1172L1584,1168L1564,1183ZM1651,1170L1671,1169L1666,1189ZM1700,1167L1703,1187L1685,1191ZM1727,1173L1720,1190L1703,1187ZM1778,1174L1778,1188L1758,1189ZM1785,1171L1811,1173L1808,1190ZM1880,1177L1877,1187L1854,1183ZM2075,1169L2096,1170L2082,1187ZM1617,1192L1621,1207L1603,1209ZM1659,1194L1666,1189L1669,1202ZM1739,1189L1736,1208L1718,1209ZM1808,1190L1827,1192L1827,1205ZM1808,1190L1827,1205L1813,1203ZM1837,1188L1855,1207L1842,1204ZM1877,1187L1876,1211L1855,1207ZM1877,1187L1889,1183L1893,1206ZM1889,1183L1911,1208L1893,1206ZM1903,1191L1924,1188L1911,1208ZM2008,1194L2029,1192L2026,1209ZM1535,1205L1552,1204L1531,1228ZM1650,1209L1669,1202L1659,1224ZM1758,1203L1767,1207L1753,1223ZM1767,1207L1768,1224L1753,1223ZM1813,1203L1827,1205L1827,1224ZM1855,1207L1870,1227L1862,1218ZM1911,1208L1930,1225L1914,1224ZM2015,1204L2011,1220L1992,1228ZM2026,1209L2034,1229L2011,1220ZM2101,1202L2109,1220L2093,1224ZM1522,1219L1531,1228L1541,1242ZM1552,1226L1567,1220L1548,1239ZM1567,1220L1584,1229L1565,1237ZM1659,1224L1668,1224L1653,1235ZM1768,1224L1773,1237L1761,1240ZM1862,1218L1869,1240L1856,1241ZM1896,1217L1897,1245L1869,1240ZM1896,1217L1911,1242L1897,1245ZM1930,1225L1946,1240L1927,1246ZM1963,1226L1977,1220L1960,1245ZM1977,1220L1978,1241L1960,1245ZM1992,1228L2011,1220L2011,1245ZM2034,1229L2050,1235L2034,1246ZM2065,1222L2079,1225L2083,1241ZM1482,1235L1499,1246L1506,1260ZM1541,1242L1534,1256L1521,1254ZM1709,1245L1705,1253L1685,1255ZM1744,1240L1761,1258L1741,1261ZM1793,1238L1812,1242L1791,1253ZM1823,1234L1820,1256L1807,1257ZM2034,1246L2050,1235L2027,1254ZM2057,1238L2083,1241L2082,1255ZM2083,1241L2093,1235L2092,1260ZM2083,1241L2092,1260L2082,1255ZM2126,1243L2132,1256L2119,1253ZM1521,1254L1513,1280L1503,1270ZM1685,1255L1690,1273L1667,1269ZM1772,1258L1791,1253L1773,1272ZM1856,1254L1877,1258L1863,1269ZM1962,1254L1974,1262L1978,1271ZM1456,1275L1472,1276L1465,1287ZM1503,1270L1517,1288L1505,1297ZM1513,1280L1540,1276L1540,1295ZM1547,1276L1569,1287L1549,1289ZM1589,1273L1583,1290L1569,1287ZM1742,1273L1756,1273L1754,1297ZM1839,1279L1857,1293L1839,1294ZM1913,1276L1931,1271L1921,1287ZM1956,1278L1978,1271L1963,1294ZM2013,1280L2026,1275L2026,1290ZM2062,1280L2061,1297L2048,1289ZM2111,1276L2129,1277L2110,1287Z" fill="#1f8e83"/><path d="M1552,812L1547,828L1533,828ZM1623,811L1619,829L1609,832ZM1685,812L1682,832L1666,837ZM1685,812L1711,819L1682,832ZM1775,821L1795,813L1769,836ZM1928,810L1926,830L1915,834ZM1992,816L2005,810L1997,834ZM1499,837L1516,853L1504,853ZM1547,828L1558,854L1539,851ZM1571,838L1582,853L1569,849ZM1582,827L1609,832L1582,853ZM1609,832L1608,849L1582,853ZM1813,836L1830,831L1802,845ZM1858,829L1874,828L1858,848ZM1915,834L1926,830L1923,848ZM2065,834L2077,837L2060,845ZM2107,833L2135,843L2114,847ZM1482,851L1486,871L1468,862ZM1569,849L1570,863L1558,871ZM1673,848L1691,870L1670,864ZM1707,852L1716,845L1719,871ZM1707,852L1719,871L1699,866ZM1716,845L1742,863L1719,871ZM1738,851L1753,851L1742,863ZM1889,854L1903,848L1912,867ZM1903,848L1920,863L1912,867ZM1958,843L1978,844L1971,869ZM2032,848L2044,865L2028,871ZM1558,871L1570,863L1556,885ZM1634,866L1639,888L1624,880ZM1670,864L1669,888L1657,879ZM1691,870L1699,866L1704,879ZM1791,866L1795,879L1774,886ZM1858,864L1873,866L1853,885ZM2013,868L2028,871L2023,885ZM1556,885L1568,896L1553,898ZM1605,878L1624,880L1624,900ZM1624,880L1639,888L1638,901ZM1657,879L1657,899L1638,901ZM1669,888L1684,894L1666,894ZM1723,878L1725,894L1710,900ZM1774,886L1795,879L1773,895ZM1825,883L1829,896L1805,899ZM1846,881L1853,885L1838,897ZM1940,886L1960,879L1955,902ZM1997,879L2014,885L1997,896ZM2023,885L2040,878L2044,906ZM2063,880L2084,883L2060,898ZM2107,886L2132,905L2109,897ZM1553,898L1547,912L1535,915ZM1666,894L1684,917L1665,923ZM1757,899L1773,895L1777,914ZM1757,899L1777,914L1761,918ZM1829,896L1838,897L1844,922ZM1974,902L1976,918L1957,912ZM2044,906L2060,898L2043,912ZM2109,897L2132,905L2129,921ZM1717,915L1734,918L1742,933ZM1777,914L1784,917L1768,932ZM2116,918L2108,937L2090,930ZM1624,939L1638,931L1639,953ZM1806,933L1827,939L1829,956ZM1806,933L1829,956L1810,953ZM1887,940L1903,935L1915,952ZM1942,931L1942,947L1925,945ZM2061,930L2080,956L2060,948ZM2108,937L2116,948L2092,953ZM2108,937L2125,952L2116,948ZM1550,945L1567,950L1570,969ZM1567,950L1582,964L1570,969ZM1602,957L1624,956L1622,971ZM1669,952L1669,972L1658,973ZM1702,946L1702,970L1690,973ZM1717,949L1726,968L1702,970ZM1717,949L1740,954L1734,964ZM1759,949L1769,969L1752,963ZM1872,951L1887,964L1870,963ZM1915,952L1925,945L1928,971ZM1515,969L1530,982L1515,987ZM1570,969L1585,990L1575,985ZM1582,964L1604,970L1598,983ZM1622,971L1624,979L1598,983ZM1669,972L1690,973L1688,980ZM1726,968L1734,964L1721,985ZM1828,971L1846,973L1843,979ZM1870,963L1887,964L1874,989ZM1961,967L1972,969L1983,982ZM1488,985L1498,1005L1480,1001ZM1585,990L1588,1000L1564,997ZM1670,984L1688,1004L1674,998ZM1702,991L1699,1005L1688,1004ZM1702,991L1721,985L1699,1005ZM1789,988L1788,996L1767,1001ZM1806,986L1829,987L1805,1001ZM1908,991L1929,990L1914,997ZM1959,991L1983,982L1978,1006ZM2092,979L2116,999L2093,1005ZM1531,1002L1546,1014L1538,1020ZM1651,1003L1674,998L1666,1021ZM1699,1005L1721,1002L1727,1022ZM1740,1006L1734,1021L1727,1022ZM1751,1002L1767,1001L1776,1016ZM1880,1008L1890,1014L1871,1014ZM1990,1000L1990,1016L1978,1024ZM2093,1005L2118,1016L2093,1017ZM2116,999L2134,1004L2132,1021ZM1590,1013L1581,1031L1568,1034ZM1604,1014L1623,1020L1606,1035ZM1623,1020L1638,1016L1635,1032ZM1683,1014L1705,1021L1683,1035ZM1705,1021L1723,1033L1702,1030ZM1776,1016L1773,1031L1761,1041ZM1837,1016L1859,1042L1840,1033ZM2047,1018L2042,1036L2025,1039ZM2065,1023L2065,1037L2042,1036ZM1455,1031L1470,1034L1445,1052ZM1505,1037L1513,1042L1496,1054ZM1659,1039L1676,1036L1653,1052ZM1874,1033L1892,1041L1892,1053ZM1947,1036L1956,1031L1962,1052ZM1947,1036L1962,1052L1940,1057ZM2012,1036L2025,1039L2031,1053ZM1496,1054L1515,1051L1505,1070ZM1567,1054L1570,1073L1553,1074ZM1810,1054L1826,1074L1806,1073ZM1892,1053L1894,1072L1879,1069ZM1940,1057L1962,1073L1941,1067ZM1962,1052L1973,1070L1962,1073ZM2013,1054L2006,1071L1998,1068ZM2044,1051L2065,1051L2042,1064ZM1703,1073L1721,1066L1722,1082ZM1721,1066L1744,1075L1741,1092ZM1843,1073L1838,1084L1819,1089ZM1941,1067L1955,1091L1945,1087ZM1487,1087L1505,1086L1485,1105ZM1505,1086L1521,1098L1497,1103ZM1551,1086L1557,1099L1530,1107ZM1707,1082L1703,1105L1684,1104ZM1741,1092L1758,1081L1737,1107ZM1789,1083L1810,1107L1796,1100ZM1955,1091L1975,1089L1960,1105ZM2006,1084L2025,1084L2009,1105ZM2025,1084L2049,1087L2040,1104ZM2095,1089L2102,1107L2074,1101ZM2114,1086L2129,1083L2110,1103ZM1485,1105L1507,1124L1479,1116ZM1497,1103L1521,1098L1507,1124ZM1557,1099L1564,1106L1548,1118ZM1523,1125L1531,1133L1517,1139ZM1640,1124L1655,1132L1635,1140ZM1702,1120L1717,1116L1722,1134ZM1736,1119L1761,1121L1741,1141ZM1806,1119L1826,1125L1807,1140ZM2011,1125L2030,1123L2034,1136ZM2094,1121L2109,1138L2099,1142ZM1531,1133L1535,1157L1516,1158ZM1557,1132L1554,1159L1535,1157ZM1625,1133L1615,1161L1605,1156ZM1655,1132L1668,1135L1676,1152ZM1807,1140L1822,1152L1810,1160ZM1839,1139L1839,1157L1822,1152ZM1839,1139L1859,1140L1858,1150ZM1927,1133L1946,1135L1929,1156ZM1554,1159L1552,1174L1541,1173ZM1554,1159L1572,1161L1571,1172ZM1676,1152L1671,1169L1651,1170ZM1753,1153L1767,1150L1778,1174ZM1822,1152L1836,1172L1821,1169ZM1839,1157L1854,1171L1836,1172ZM1858,1150L1875,1152L1880,1177ZM2031,1159L2030,1177L2006,1169ZM1472,1172L1479,1185L1461,1194ZM1513,1169L1541,1173L1519,1189ZM1597,1167L1619,1166L1601,1188ZM1639,1170L1637,1185L1617,1192ZM1736,1175L1751,1177L1758,1189ZM1892,1175L1889,1183L1877,1187ZM1892,1175L1905,1177L1889,1183ZM1982,1176L1983,1185L1962,1186ZM2096,1170L2119,1191L2093,1187ZM1479,1185L1504,1192L1485,1207ZM1564,1183L1591,1194L1581,1211ZM1685,1191L1703,1187L1708,1205ZM1703,1187L1720,1190L1718,1209ZM1720,1190L1739,1189L1718,1209ZM1854,1183L1877,1187L1855,1207ZM1452,1203L1462,1201L1452,1225ZM1522,1212L1531,1228L1522,1219ZM1621,1207L1638,1201L1634,1226ZM1793,1207L1813,1203L1808,1223ZM1893,1206L1911,1208L1896,1217ZM2047,1205L2067,1200L2065,1222ZM2117,1206L2135,1204L2131,1222ZM1473,1221L1483,1218L1482,1235ZM1503,1218L1522,1219L1516,1244ZM1584,1229L1584,1236L1565,1237ZM1668,1224L1691,1237L1671,1237ZM1693,1224L1701,1219L1691,1237ZM1930,1225L1942,1218L1946,1240ZM1977,1220L1992,1228L1992,1242ZM2079,1225L2093,1224L2093,1235ZM1516,1244L1541,1242L1521,1254ZM1727,1237L1741,1261L1721,1252ZM1960,1245L1978,1241L1962,1254ZM1978,1241L1992,1242L1974,1262ZM1992,1242L2011,1245L2008,1257ZM1992,1242L2008,1257L1990,1259ZM2057,1238L2082,1255L2056,1253ZM1600,1258L1623,1254L1605,1279ZM1634,1256L1633,1279L1620,1269ZM1877,1258L1890,1257L1877,1273ZM1890,1257L1892,1275L1877,1273ZM2082,1255L2098,1275L2081,1271ZM1605,1279L1598,1287L1583,1290ZM1690,1273L1692,1290L1674,1289ZM1690,1273L1705,1271L1707,1294ZM1839,1279L1863,1269L1857,1293ZM1863,1269L1877,1273L1857,1293ZM1978,1271L1973,1295L1963,1294ZM2081,1271L2098,1275L2075,1296ZM2098,1275L2111,1276L2101,1297ZM2111,1276L2110,1287L2101,1297Z" fill="#1e897e"/><path d="M1570,816L1582,827L1571,838ZM1852,817L1858,829L1841,835ZM1873,813L1891,838L1874,828ZM1949,809L1963,819L1938,829ZM1992,816L1997,834L1975,835ZM2005,810L2024,820L2013,835ZM2077,813L2098,833L2077,837ZM1485,837L1482,851L1469,853ZM1609,832L1622,852L1608,849ZM1619,829L1638,836L1622,852ZM1653,831L1657,850L1640,845ZM1830,831L1841,835L1822,845ZM1874,828L1876,850L1858,848ZM1891,838L1889,854L1876,850ZM1891,838L1903,848L1889,854ZM1963,836L1978,844L1958,843ZM1975,835L1997,834L1978,844ZM2013,835L2012,854L1995,847ZM1469,853L1482,851L1468,862ZM1539,851L1558,871L1541,865ZM1689,852L1699,866L1691,870ZM1775,844L1790,846L1779,864ZM1790,846L1802,845L1809,867ZM1858,848L1858,864L1844,864ZM1938,853L1942,871L1920,863ZM1978,844L1995,847L1993,867ZM1468,862L1486,871L1484,881ZM1515,863L1541,865L1532,887ZM1570,863L1592,866L1563,886ZM1592,866L1592,889L1563,886ZM1719,871L1742,863L1734,882ZM1742,863L1751,878L1734,882ZM1753,862L1779,864L1774,886ZM1753,862L1774,886L1751,878ZM1912,867L1910,884L1892,888ZM1912,867L1920,863L1923,884ZM2066,862L2077,870L2084,883ZM2091,870L2107,886L2094,887ZM1497,884L1505,896L1490,902ZM1657,879L1666,894L1657,899ZM1704,879L1723,878L1710,900ZM1774,886L1773,895L1757,899ZM1853,885L1854,897L1838,897ZM2094,887L2107,886L2099,903ZM1455,902L1464,895L1452,916ZM1464,895L1479,920L1473,911ZM1553,898L1568,896L1547,912ZM1666,894L1684,894L1684,917ZM1710,900L1725,894L1717,915ZM1805,899L1807,918L1784,917ZM1907,905L1930,915L1904,920ZM2025,895L2043,912L2024,914ZM2099,903L2116,918L2101,919ZM1473,911L1470,936L1452,939ZM1473,911L1479,920L1481,938ZM1591,912L1600,912L1599,932ZM1591,912L1599,932L1580,929ZM1619,912L1638,931L1624,939ZM1807,918L1827,939L1806,933ZM1879,914L1887,940L1879,933ZM1887,915L1904,920L1903,935ZM2013,912L2024,914L2009,931ZM2043,912L2061,915L2049,935ZM2061,915L2061,930L2049,935ZM1470,936L1481,938L1485,955ZM1669,928L1690,951L1669,952ZM1689,938L1708,929L1702,946ZM1722,930L1740,954L1717,949ZM1742,933L1761,938L1759,949ZM2034,938L2050,948L2031,949ZM2090,930L2108,937L2092,953ZM1485,955L1483,968L1470,967ZM1485,955L1506,966L1483,968ZM1500,945L1515,969L1506,966ZM1518,952L1541,964L1515,969ZM1829,956L1828,971L1810,972ZM1829,956L1843,955L1846,973ZM1897,948L1907,968L1887,964ZM1962,956L1982,952L1961,967ZM2092,953L2099,973L2079,966ZM2116,948L2125,952L2130,970ZM1622,971L1632,968L1624,979ZM1632,968L1658,973L1640,983ZM1658,973L1669,972L1648,982ZM1734,964L1752,963L1734,982ZM1734,982L1761,987L1740,1006ZM1896,990L1914,997L1890,998ZM1939,988L1965,1000L1943,1001ZM2041,984L2057,984L2040,997ZM2117,991L2131,981L2116,999ZM1472,996L1489,1018L1464,1016ZM1498,1005L1514,1014L1506,1015ZM1516,1005L1531,1002L1538,1020ZM1601,1002L1621,1008L1604,1014ZM1621,1008L1623,1020L1604,1014ZM1740,1006L1751,1002L1760,1014ZM1751,1002L1776,1016L1760,1014ZM1839,1002L1861,1007L1855,1024ZM2093,1005L2116,999L2118,1016ZM1449,1021L1464,1016L1455,1031ZM1489,1018L1506,1015L1505,1037ZM1538,1020L1546,1014L1534,1038ZM1546,1014L1568,1034L1555,1033ZM1788,1013L1793,1031L1773,1031ZM1788,1013L1810,1019L1807,1031ZM1810,1019L1830,1037L1807,1031ZM1837,1016L1855,1024L1859,1042ZM1890,1014L1908,1020L1892,1041ZM1978,1024L1982,1036L1956,1031ZM2033,1020L2025,1039L2012,1036ZM2118,1016L2132,1021L2108,1042ZM1568,1034L1581,1031L1588,1053ZM1734,1036L1761,1041L1743,1055ZM1761,1041L1755,1057L1743,1055ZM1807,1031L1810,1054L1793,1053ZM1567,1054L1588,1053L1570,1073ZM1607,1058L1617,1051L1597,1075ZM1653,1052L1677,1049L1649,1068ZM1755,1057L1775,1051L1772,1069ZM1775,1051L1793,1053L1789,1064ZM1861,1056L1879,1048L1862,1075ZM1892,1053L1914,1073L1894,1072ZM1932,1057L1941,1067L1925,1066ZM1991,1047L2013,1054L1998,1068ZM2065,1051L2058,1069L2042,1064ZM2065,1051L2074,1064L2058,1069ZM2080,1056L2095,1055L2074,1064ZM1505,1070L1518,1064L1523,1088ZM1703,1073L1722,1082L1707,1082ZM1744,1075L1758,1067L1741,1092ZM1826,1074L1819,1089L1804,1086ZM1826,1074L1843,1073L1819,1089ZM1962,1073L1973,1070L1975,1089ZM2006,1071L2026,1066L2006,1084ZM1462,1088L1485,1105L1465,1102ZM1523,1088L1535,1083L1521,1098ZM1617,1089L1639,1104L1616,1102ZM1838,1084L1837,1103L1823,1101ZM1975,1089L1977,1109L1960,1105ZM2049,1087L2060,1087L2059,1104ZM1639,1104L1640,1124L1624,1125ZM1672,1108L1670,1122L1659,1122ZM1684,1104L1702,1120L1685,1115ZM1772,1108L1796,1100L1777,1124ZM1863,1103L1854,1115L1844,1119ZM1908,1101L1920,1108L1906,1117ZM1564,1117L1589,1121L1580,1135ZM1564,1117L1580,1135L1569,1136ZM1886,1119L1906,1139L1895,1140ZM2062,1122L2057,1141L2048,1143ZM2094,1121L2099,1142L2081,1138ZM1465,1135L1471,1150L1456,1159ZM1503,1134L1506,1158L1483,1160ZM1531,1133L1557,1132L1535,1157ZM1557,1132L1569,1136L1572,1161ZM1599,1137L1625,1133L1605,1156ZM1776,1143L1791,1133L1786,1153ZM1859,1140L1880,1140L1858,1150ZM1946,1135L1960,1138L1947,1153ZM2010,1139L2017,1158L1988,1152ZM2099,1142L2102,1156L2084,1151ZM2099,1142L2109,1138L2102,1156ZM2109,1138L2131,1140L2111,1150ZM2131,1140L2129,1155L2111,1150ZM1686,1159L1700,1167L1692,1172ZM1753,1153L1778,1174L1751,1177ZM1810,1160L1822,1152L1821,1169ZM1875,1152L1888,1158L1880,1177ZM2017,1158L2031,1159L2006,1169ZM2062,1160L2084,1151L2060,1170ZM2111,1150L2129,1155L2135,1173ZM1472,1172L1482,1175L1479,1185ZM1584,1168L1591,1194L1564,1183ZM1671,1169L1692,1172L1685,1191ZM1778,1174L1794,1194L1778,1188ZM1811,1173L1821,1169L1827,1192ZM1880,1177L1892,1175L1877,1187ZM1930,1172L1924,1188L1903,1191ZM1948,1170L1966,1170L1962,1186ZM1999,1175L1995,1191L1983,1185ZM2060,1170L2082,1187L2059,1190ZM2135,1173L2130,1190L2119,1191ZM1685,1191L1692,1209L1669,1202ZM1703,1187L1718,1209L1708,1205ZM1924,1188L1925,1203L1911,1208ZM1962,1186L1983,1185L1975,1208ZM1983,1185L1996,1206L1975,1208ZM1995,1191L2008,1194L1996,1206ZM2093,1187L2117,1206L2101,1202ZM1507,1207L1522,1212L1503,1218ZM1552,1204L1567,1220L1552,1226ZM1581,1211L1603,1209L1599,1228ZM1758,1203L1753,1223L1733,1221ZM1855,1207L1862,1218L1843,1224ZM1855,1207L1876,1211L1870,1227ZM1975,1208L1996,1206L1977,1220ZM2015,1204L2026,1209L2011,1220ZM1473,1221L1482,1235L1472,1237ZM1584,1229L1605,1240L1584,1236ZM1625,1225L1617,1237L1605,1240ZM1733,1221L1744,1240L1727,1237ZM1843,1224L1862,1218L1838,1239ZM1870,1227L1896,1217L1869,1240ZM2093,1224L2109,1220L2093,1235ZM2131,1222L2126,1243L2110,1236ZM1548,1239L1568,1261L1551,1262ZM1605,1240L1617,1237L1623,1254ZM1617,1237L1634,1256L1623,1254ZM1691,1237L1709,1245L1685,1255ZM2034,1246L2027,1254L2008,1257ZM1534,1256L1540,1276L1513,1280ZM1534,1256L1551,1262L1547,1276ZM1623,1254L1620,1269L1605,1279ZM1741,1261L1742,1273L1725,1277ZM1741,1261L1761,1258L1742,1273ZM1791,1253L1790,1280L1773,1272ZM1791,1253L1807,1257L1790,1280ZM2082,1255L2081,1271L2062,1280ZM2082,1255L2092,1260L2098,1275ZM1667,1269L1690,1273L1674,1289ZM1725,1277L1724,1294L1707,1294ZM1725,1277L1737,1287L1724,1294ZM1742,1273L1754,1297L1737,1287ZM1811,1270L1826,1278L1819,1285Z" fill="#1d8479"/><path d="M1739,817L1751,831L1741,835ZM2005,810L2013,835L1997,834ZM2024,820L2041,818L2042,832ZM2096,818L2108,818L2098,833ZM1519,830L1539,851L1516,853ZM1666,837L1673,848L1657,850ZM1666,837L1682,832L1673,848ZM1682,832L1689,852L1673,848ZM1841,835L1837,843L1822,845ZM1926,830L1938,829L1923,848ZM1938,829L1938,853L1923,848ZM1997,834L1995,847L1978,844ZM2107,833L2127,834L2135,843ZM1539,851L1541,865L1515,863ZM1622,852L1640,845L1634,866ZM1640,845L1657,850L1649,867ZM1822,845L1844,864L1827,861ZM1876,850L1889,854L1873,866ZM2080,850L2077,870L2066,862ZM1500,865L1515,863L1522,878ZM1602,864L1626,866L1605,878ZM1626,866L1624,880L1605,878ZM1634,866L1649,867L1657,879ZM1691,870L1704,879L1684,884ZM1742,863L1753,862L1751,878ZM1809,867L1806,881L1795,879ZM1971,869L1974,881L1960,879ZM1993,867L2013,868L1997,879ZM2028,871L2044,865L2040,878ZM2077,870L2094,887L2084,883ZM1484,881L1497,884L1490,902ZM1522,878L1519,898L1505,896ZM1556,885L1563,886L1568,896ZM1723,878L1739,905L1725,894ZM1853,885L1871,885L1872,900ZM1910,884L1928,902L1907,905ZM1923,884L1940,886L1928,902ZM1532,898L1535,915L1519,923ZM1568,896L1590,902L1574,917ZM1886,905L1907,905L1904,920ZM1997,896L1991,912L1976,918ZM1997,896L2007,894L1991,912ZM2007,894L2013,912L1991,912ZM2025,895L2044,906L2043,912ZM1547,912L1574,917L1549,929ZM1704,917L1717,915L1722,930ZM1761,918L1768,932L1761,938ZM1784,917L1795,934L1768,932ZM1844,922L1859,929L1841,940ZM1930,915L1939,912L1942,931ZM1957,912L1957,930L1942,931ZM1991,912L2009,931L1997,931ZM1572,935L1586,953L1567,950ZM1580,929L1599,932L1586,953ZM1599,932L1624,939L1624,956ZM1689,938L1702,946L1690,951ZM1978,932L1993,946L1982,952ZM1531,950L1546,963L1541,964ZM1602,957L1604,970L1582,964ZM1624,956L1639,953L1632,968ZM1690,951L1690,973L1669,972ZM1925,945L1938,967L1928,971ZM2013,952L2031,949L2011,974ZM2031,949L2033,963L2011,974ZM2031,949L2048,971L2033,963ZM1470,967L1483,968L1488,985ZM1470,967L1488,985L1465,983ZM1506,966L1515,969L1515,987ZM1604,970L1622,971L1598,983ZM1702,970L1721,985L1702,991ZM1846,973L1860,974L1843,979ZM1938,967L1939,988L1929,990ZM1961,967L1983,982L1959,991ZM2033,963L2048,971L2030,980ZM2048,971L2060,963L2057,984ZM2099,973L2117,991L2092,979ZM1465,983L1488,985L1480,1001ZM1547,985L1575,985L1558,1004ZM1721,985L1734,982L1740,1006ZM1852,988L1861,1007L1839,1002ZM1939,988L1959,991L1965,1000ZM1993,982L1990,1000L1978,1006ZM1993,982L2011,982L1990,1000ZM2057,984L2060,998L2040,997ZM2084,990L2092,979L2085,999ZM2092,979L2117,991L2116,999ZM1447,1007L1464,1016L1449,1021ZM1558,1004L1564,997L1573,1019ZM1558,1004L1573,1019L1546,1014ZM1688,1004L1705,1021L1683,1014ZM1805,1001L1826,1007L1829,1019ZM1861,1007L1880,1008L1855,1024ZM1890,998L1914,997L1890,1014ZM1489,1018L1505,1037L1479,1038ZM1573,1019L1590,1013L1568,1034ZM1590,1013L1604,1014L1606,1035ZM1855,1024L1871,1014L1874,1033ZM1908,1020L1928,1015L1931,1034ZM2077,1014L2093,1017L2075,1032ZM2132,1021L2126,1032L2108,1042ZM1635,1032L1659,1039L1642,1049ZM1702,1030L1708,1047L1690,1056ZM1761,1041L1773,1031L1755,1057ZM2075,1032L2095,1055L2080,1056ZM2098,1039L2108,1042L2095,1055ZM2108,1042L2108,1050L2095,1055ZM1480,1055L1496,1054L1483,1069ZM1515,1051L1518,1064L1505,1070ZM1547,1056L1553,1074L1539,1073ZM1607,1058L1597,1075L1590,1071ZM1677,1049L1666,1067L1649,1068ZM1841,1047L1861,1056L1862,1075ZM1879,1048L1892,1053L1879,1069ZM1539,1073L1535,1083L1523,1088ZM1879,1069L1894,1072L1887,1085ZM2042,1064L2049,1087L2025,1084ZM2074,1064L2097,1075L2083,1088ZM2097,1075L2117,1068L2095,1089ZM1551,1086L1564,1106L1557,1099ZM1722,1082L1741,1092L1737,1107ZM1773,1087L1772,1108L1761,1109ZM1789,1083L1804,1086L1810,1107ZM1880,1085L1872,1105L1863,1103ZM1914,1082L1920,1108L1908,1101ZM1975,1089L1997,1102L1977,1109ZM1449,1109L1465,1102L1446,1127ZM1521,1098L1523,1125L1507,1124ZM1658,1108L1659,1122L1640,1124ZM1672,1108L1684,1104L1670,1122ZM1703,1105L1717,1116L1702,1120ZM1717,1109L1736,1119L1717,1116ZM1810,1107L1806,1119L1791,1119ZM1872,1105L1891,1105L1876,1118ZM1977,1109L1997,1102L1996,1124ZM1564,1117L1569,1136L1557,1132ZM1670,1122L1685,1115L1668,1135ZM1685,1115L1693,1137L1668,1135ZM1806,1119L1807,1140L1791,1133ZM1996,1124L2011,1125L2010,1139ZM2040,1117L2048,1143L2034,1136ZM1503,1134L1517,1139L1516,1158ZM1580,1135L1605,1156L1586,1155ZM1722,1134L1739,1153L1723,1160ZM1791,1133L1807,1140L1786,1153ZM1807,1140L1822,1140L1822,1152ZM1960,1138L1965,1150L1947,1153ZM2081,1138L2099,1142L2084,1151ZM1506,1158L1516,1158L1513,1169ZM1767,1150L1785,1171L1778,1174ZM1929,1156L1930,1172L1905,1177ZM1988,1152L2017,1158L1999,1175ZM2031,1159L2039,1153L2030,1177ZM2102,1156L2111,1150L2096,1170ZM2111,1150L2135,1173L2110,1171ZM1449,1170L1472,1172L1453,1194ZM1498,1171L1513,1169L1504,1192ZM1584,1168L1597,1167L1601,1188ZM1751,1177L1778,1174L1758,1189ZM1905,1177L1903,1191L1889,1183ZM2060,1170L2075,1169L2082,1187ZM1504,1192L1522,1212L1507,1207ZM1564,1183L1572,1207L1552,1204ZM1601,1188L1603,1209L1581,1211ZM1637,1185L1659,1194L1638,1201ZM1739,1189L1758,1189L1736,1208ZM1794,1194L1793,1207L1767,1207ZM1827,1192L1837,1188L1827,1205ZM1877,1187L1893,1206L1876,1211ZM1924,1188L1945,1205L1925,1203ZM1983,1185L1995,1191L1996,1206ZM1603,1209L1625,1225L1599,1228ZM1669,1202L1668,1224L1659,1224ZM1842,1204L1855,1207L1843,1224ZM1954,1202L1975,1208L1963,1226ZM1473,1221L1472,1237L1455,1236ZM1531,1228L1552,1226L1541,1242ZM1552,1226L1548,1239L1541,1242ZM1792,1221L1812,1242L1793,1238ZM1653,1235L1671,1237L1654,1256ZM1773,1237L1791,1253L1772,1258ZM1869,1240L1890,1257L1877,1258ZM1897,1245L1911,1242L1908,1259ZM2011,1245L2034,1246L2008,1257ZM1506,1260L1521,1254L1503,1270ZM1568,1261L1588,1252L1575,1277ZM1588,1252L1605,1279L1589,1273ZM1676,1258L1685,1255L1667,1269ZM1807,1257L1811,1270L1790,1280ZM1931,1255L1943,1258L1947,1273ZM1974,1262L1990,1259L1999,1274ZM2056,1253L2062,1280L2046,1271ZM1480,1273L1503,1270L1482,1287ZM1513,1280L1540,1295L1517,1288ZM1540,1276L1547,1276L1540,1295ZM1605,1279L1620,1269L1598,1287ZM1690,1273L1707,1294L1692,1290ZM1705,1271L1725,1277L1707,1294ZM1892,1275L1891,1285L1875,1289ZM1947,1273L1963,1294L1946,1291ZM1999,1274L1990,1287L1973,1295Z" fill="#1a776e"/><g filter="url(#bl5)"><path d="M1820,835 L1960,833 L2060,846 L2075,880 L1950,885 L1800,880 Z" fill="#2a9a8e" opacity="0.55"/><path d="M2060,880 L2110,900 L2112,1250 L2070,1250 Z" fill="#12665f" opacity="0.45"/><path d="M1450,1230 L1700,1250 L2100,1235 L2100,1275 L1450,1275 Z" fill="#12665f" opacity="0.4"/><path d="M1470,1040 L1500,1040 L1505,1180 L1470,1180 Z" fill="#136a62" opacity="0.35"/></g><g filter="url(#bl2)"><ellipse cx="1725" cy="968" rx="31" ry="44" transform="rotate(-12 1725 968)" fill="none" stroke="#0c544d" stroke-width="11" stroke-opacity="0.6"/><ellipse cx="1722" cy="962" rx="13" ry="20" transform="rotate(-12 1722 962)" fill="#0c544d" opacity="0.6"/><ellipse cx="1925" cy="966" rx="96" ry="89" fill="none" stroke="#0c544d" stroke-width="10" stroke-opacity="0.55"/><ellipse cx="1927" cy="965" rx="58" ry="58" fill="none" stroke="#0c544d" stroke-width="9" stroke-opacity="0.5"/><path d="M1805,842 Q1900,850 2060,860" fill="none" stroke="#0c544d" stroke-width="7" stroke-opacity="0.385" stroke-linecap="round" stroke-linejoin="round"/><path d="M1790,858 Q1900,866 2065,878" fill="none" stroke="#0c544d" stroke-width="7" stroke-opacity="0.385" stroke-linecap="round" stroke-linejoin="round"/><path d="M1760,870 Q1900,880 2070,892" fill="none" stroke="#0c544d" stroke-width="7" stroke-opacity="0.33" stroke-linecap="round" stroke-linejoin="round"/><path d="M1714,896 Q1745,900 1760,920 Q1783,951 1797,1007" fill="none" stroke="#0c544d" stroke-width="10" stroke-opacity="0.66" stroke-linecap="round" stroke-linejoin="round"/><path d="M1600,945 Q1650,910 1700,905" fill="none" stroke="#0c544d" stroke-width="9" stroke-opacity="0.49500000000000005" stroke-linecap="round" stroke-linejoin="round"/><path d="M1786,896 Q1815,925 1834,964 Q1850,1000 1886,1024 Q1937,1040 1989,1007 Q2015,965 2006,913 Q1995,885 1985,879" fill="none" stroke="#0c544d" stroke-width="11" stroke-opacity="0.66" stroke-linecap="round" stroke-linejoin="round"/><path d="M1934,913 Q1915,945 1924,971 Q1945,985 1975,940" fill="none" stroke="#0c544d" stroke-width="11" stroke-opacity="0.7150000000000001" stroke-linecap="round" stroke-linejoin="round"/><path d="M1830,880 Q1900,860 1960,875" fill="none" stroke="#0c544d" stroke-width="8" stroke-opacity="0.385" stroke-linecap="round" stroke-linejoin="round"/><path d="M1483,1069 Q1528,1079 1586,1065 Q1645,1073 1703,1087 Q1781,1100 1859,1104 L1928,1104" fill="none" stroke="#0c544d" stroke-width="11" stroke-opacity="0.7150000000000001" stroke-linecap="round" stroke-linejoin="round"/><path d="M1489,1085 Q1540,1095 1590,1090" fill="none" stroke="#0c544d" stroke-width="8" stroke-opacity="0.49500000000000005" stroke-linecap="round" stroke-linejoin="round"/><path d="M1500,1003 Q1560,990 1620,995" fill="none" stroke="#0c544d" stroke-width="8" stroke-opacity="0.385" stroke-linecap="round" stroke-linejoin="round"/><path d="M1578,1098 Q1562,1133 1574,1160 Q1594,1180 1622,1170" fill="none" stroke="#0c544d" stroke-width="11" stroke-opacity="0.66" stroke-linecap="round" stroke-linejoin="round"/><path d="M1648,1098 Q1632,1133 1644,1160 Q1664,1180 1692,1170" fill="none" stroke="#0c544d" stroke-width="11" stroke-opacity="0.66" stroke-linecap="round" stroke-linejoin="round"/><path d="M1718,1098 Q1702,1133 1714,1160 Q1734,1180 1762,1170" fill="none" stroke="#0c544d" stroke-width="11" stroke-opacity="0.66" stroke-linecap="round" stroke-linejoin="round"/><path d="M1788,1098 Q1772,1133 1784,1160 Q1804,1180 1832,1170" fill="none" stroke="#0c544d" stroke-width="11" stroke-opacity="0.66" stroke-linecap="round" stroke-linejoin="round"/><path d="M1858,1098 Q1842,1133 1854,1160 Q1874,1180 1902,1170" fill="none" stroke="#0c544d" stroke-width="11" stroke-opacity="0.66" stroke-linecap="round" stroke-linejoin="round"/><path d="M1929,1089 L1931,1180" fill="none" stroke="#0c544d" stroke-width="10" stroke-opacity="0.6050000000000001" stroke-linecap="round" stroke-linejoin="round"/><path d="M1518,1118 Q1524,1176 1538,1196" fill="none" stroke="#0c544d" stroke-width="10" stroke-opacity="0.55" stroke-linecap="round" stroke-linejoin="round"/><path d="M1547,1198 Q1645,1194 1742,1188 Q1840,1182 1928,1176" fill="none" stroke="#0c544d" stroke-width="10" stroke-opacity="0.66" stroke-linecap="round" stroke-linejoin="round"/><path d="M1505,1221 Q1547,1233 1645,1223 Q1742,1215 1840,1206 L1918,1194" fill="none" stroke="#0c544d" stroke-width="10" stroke-opacity="0.6050000000000001" stroke-linecap="round" stroke-linejoin="round"/><path d="M1462,1186 Q1500,1180 1530,1170" fill="none" stroke="#0c544d" stroke-width="8" stroke-opacity="0.44000000000000006" stroke-linecap="round" stroke-linejoin="round"/><path d="M1935,1100 Q2000,1110 2090,1118" fill="none" stroke="#0c544d" stroke-width="7" stroke-opacity="0.33" stroke-linecap="round" stroke-linejoin="round"/><path d="M1935,1140 Q2000,1150 2095,1158" fill="none" stroke="#0c544d" stroke-width="7" stroke-opacity="0.33" stroke-linecap="round" stroke-linejoin="round"/><path d="M1945,1060 Q2010,1066 2095,1075" fill="none" stroke="#0c544d" stroke-width="7" stroke-opacity="0.33" stroke-linecap="round" stroke-linejoin="round"/><path d="M2020,880 Q2040,980 2050,1240" fill="none" stroke="#0c544d" stroke-width="7" stroke-opacity="0.275" stroke-linecap="round" stroke-linejoin="round"/><path d="M1498,1010 Q1560,997 1630,1002 Q1700,1012 1760,1030" fill="none" stroke="#36a99c" stroke-width="6" stroke-opacity="0.35" stroke-linecap="round"/><path d="M1495,1078 Q1545,1090 1600,1082 Q1700,1095 1800,1112" fill="none" stroke="#36a99c" stroke-width="5" stroke-opacity="0.3" stroke-linecap="round"/><path d="M1600,1110 Q1610,1130 1615,1145" fill="none" stroke="#36a99c" stroke-width="10" stroke-opacity="0.3" stroke-linecap="round"/><path d="M1660,1105 Q1670,1125 1680,1140" fill="none" stroke="#36a99c" stroke-width="10" stroke-opacity="0.3" stroke-linecap="round"/><path d="M1760,1125 Q1770,1140 1775,1150" fill="none" stroke="#36a99c" stroke-width="9" stroke-opacity="0.3" stroke-linecap="round"/><path d="M1850,1125 Q1870,1140 1880,1150" fill="none" stroke="#36a99c" stroke-width="9" stroke-opacity="0.3" stroke-linecap="round"/><path d="M1550,1208 Q1650,1205 1760,1198 Q1860,1192 1920,1188" fill="none" stroke="#36a99c" stroke-width="5" stroke-opacity="0.3" stroke-linecap="round"/><path d="M1720,890 Q1760,885 1790,900" fill="none" stroke="#36a99c" stroke-width="5" stroke-opacity="0.3" stroke-linecap="round"/><path d="M1900,925 Q1940,905 1970,915" fill="none" stroke="#36a99c" stroke-width="6" stroke-opacity="0.3" stroke-linecap="round"/><path d="M1850,900 Q1830,960 1860,1000" fill="none" stroke="#36a99c" stroke-width="5" stroke-opacity="0.25" stroke-linecap="round"/></g><polygon points="1687.0,859.0 1704.0,855.0 1735.0,863.0 1788.0,850.5 1808.0,828.0 1833.0,824.0 1861.0,825.0 1895.0,831.0 1917.0,836.5 1962.0,835.0 1982.0,833.0 2015.0,841.0 2052.0,845.0 2066.0,850.5 2083.0,876.0 2093.0,951.7 2103.0,962.0 2106.7,1020.0 2110.0,1071.8 2106.7,1123.0 2105.0,1192.0 2103.0,1226.0 2093.0,1247.0 1935.0,1255.5 1815.0,1259.0 1694.7,1262.0 1557.3,1264.0 1532.7,1266.0 1486.4,1262.0 1461.6,1250.0 1458.5,1215.7 1467.8,1178.6 1495.6,1160.0 1484.8,1129.0 1484.8,1092.0 1480.2,1073.5 1478.6,1042.6 1494.0,1021.0 1500.3,1000.8 1520.4,987.0 1542.0,965.3 1545.0,945.0 1573.0,931.3 1591.5,928.2 1607.0,936.0 1613.0,922.0 1656.4,903.5 1693.5,885.0" fill="none" stroke="#0f5a53" stroke-width="6" stroke-opacity="0.35" filter="url(#bl2)"/></g><path d="M1807,1044 L1807,824" stroke="#0000ff" stroke-width="2.4" stroke-dasharray="10 6"/><polygon points="1797,825 1817,825 1807,799" fill="#0000ff"/><path d="M1807,1044 L2098,1066.5" stroke="#00e000" stroke-width="2.4" stroke-dasharray="10 6"/><polygon points="2096,1059 2122,1068 2095,1076" fill="#00d000"/><path d="M1807,1044 L1650,1088" stroke="#e00000" stroke-width="2.4" stroke-dasharray="10 6"/><path d="M1633,1090 L1645,1080 Q1652,1079 1652,1088 L1650,1096 Q1645,1099 1640,1095 Z" fill="#e00000"/><polygon points="907.9,1708.8 962.3,1692.7 1080.2,1700.6 1022.5,1716.6" fill="#cbcbcb"/><polygon points="907.9,1708.8 1022.5,1716.6 1022.5,1844 907.9,1836" fill="#c6c6c6"/><polygon points="1022.5,1716.6 1080.2,1700.6 1080.2,1824.6 1022.5,1844" fill="#c4c4c4"/><path d="M936,1709 L936,1837 M994,1714 L994,1842 M907.9,1740 L1022.5,1747 M907.9,1804 L1022.5,1812 M1037,1712 L1037,1840 M1066,1705 L1066,1829 M1022.5,1748 L1080.2,1732 M1022.5,1812 L1080.2,1796" stroke="#d4d4d4" stroke-width="1" fill="none"/><text x="940" y="1786" font-family="Liberation Sans" font-size="25" fill="#3a3a3a" transform="rotate(2 965 1780)">Right</text><text transform="matrix(0.85,-0.2,0.05,1.2,1040,1784)" font-family="Liberation Sans" font-size="18" fill="#3a3a3a">Back</text><path d="M979,1703 Q995,1697 1011,1699" stroke="#555" stroke-width="1.5" fill="none" stroke-dasharray="3 2"/><path d="M965.6,1818.8 L965.6,1695" stroke="#a8a8d8" stroke-width="2.5" opacity="0.8"/><polygon points="959,1698 972,1698 965.6,1685" fill="#a8a8d8"/><path d="M965.6,1818.8 L910,1835" stroke="#d8a0a0" stroke-width="2.5"/><polygon points="903,1837 915,1828 913,1840" fill="#d8a0a0"/><path d="M965.6,1818.8 L1075,1826" stroke="#a8d0a8" stroke-width="2.5"/><polygon points="1073,1820 1085,1827 1073,1832" fill="#a8d0a8"/><text x="959" y="1663" font-family="Liberation Sans" font-size="18" fill="#b4b4dc">z</text><text x="884" y="1848" font-family="Liberation Sans" font-size="20" fill="#dcb2b2">x</text><text x="1106" y="1840" font-family="Liberation Sans" font-size="22" fill="#b2d8b2">y</text></svg><div class="r" style="left:852px;top:1007px;width:13px;height:14px;border-radius:7px;background:#dedede;border:1px solid #fff;"></div><div class="r" style="left:1348px;top:132px;width:1632px;height:96px;background:#f9f9f9;"></div><svg class="r" style="left:1362px;top:147px;" width="64" height="64" viewBox="0 0 64 64"><path d="M2 12 L32 1 L61 12 L32 25 Z M2 12 L2 48 L32 62 M32 25 L32 62 M61 12 L61 38" stroke="#2b3133" stroke-width="2.8" fill="none" stroke-linejoin="round" stroke-linecap="round"/><rect x="41" y="40" width="21" height="21" rx="3" stroke="#2b3133" stroke-width="2.8" fill="none" stroke-linejoin="round" stroke-linecap="round"/><path d="M51.5 44 L51.5 57 M45 50.5 L58 50.5" stroke="#2b3133" stroke-width="2.8" fill="none" stroke-linejoin="round" stroke-linecap="round"/></svg><svg class="r" style="left:1451px;top:147px;" width="64" height="64" viewBox="0 0 64 64"><path d="M21 61 L4 61 Q1 61 1 58 L1 4 Q1 1 4 1 L58 1 Q61 1 61 4 L61 34" stroke="#2b3133" stroke-width="2.8" fill="none" stroke-linejoin="round" stroke-linecap="round"/><path d="M16 4 L16 59 M30 4 L30 59 M44 4 L44 37 M4 16 L58 16 M4 30 L58 30 M4 44 L37 44" stroke="#2b3133" stroke-width="2.8" fill="none" stroke-linejoin="round" stroke-linecap="round"/><rect x="40" y="40" width="21" height="21" rx="3" stroke="#2b3133" stroke-width="2.8" fill="none" stroke-linejoin="round" stroke-linecap="round"/><path d="M50.5 44 L50.5 57 M44 50.5 L57 50.5" stroke="#2b3133" stroke-width="2.8" fill="none" stroke-linejoin="round" stroke-linecap="round"/></svg><svg class="r" style="left:1539px;top:147px;" width="64" height="64" viewBox="0 0 64 64"><path d="M35 2 L62 27 L35 52 L8 27 Z" stroke="#2b3133" stroke-width="2.8" fill="none" stroke-linejoin="round" stroke-linecap="round"/><path d="M27 36 L27 23 Q27 16 35 16 Q43 16 43 23 L43 36 M27 28 L43 28" stroke="#2b3133" stroke-width="2.8" fill="none" stroke-linejoin="round" stroke-linecap="round"/><path d="M16 40 L6 52 M6 52 L6 43 M6 52 L15 50 M1 61 L63 61" stroke="#2b3133" stroke-width="2.8" fill="none" stroke-linejoin="round" stroke-linecap="round"/></svg><svg class="r" style="left:1627px;top:147px;" width="64" height="64" viewBox="0 0 64 64"><rect x="1.5" y="1.5" width="60" height="60" rx="3" stroke="#2b3133" stroke-width="2.8" fill="none" stroke-linejoin="round" stroke-linecap="round"/><rect x="7" y="7" width="28" height="12" rx="6" stroke="#2b3133" stroke-width="2.8" fill="none" stroke-linejoin="round" stroke-linecap="round"/><rect x="40" y="7" width="16" height="28" rx="2" stroke="#2b3133" stroke-width="2.8" fill="none" stroke-linejoin="round" stroke-linecap="round"/><circle cx="12" cy="28" r="6" stroke="#2b3133" stroke-width="2.8" fill="none" stroke-linejoin="round" stroke-linecap="round"/><circle cx="29" cy="28" r="6" stroke="#2b3133" stroke-width="2.8" fill="none" stroke-linejoin="round" stroke-linecap="round"/><rect x="7" y="40" width="49" height="16" rx="2" stroke="#2b3133" stroke-width="2.8" fill="none" stroke-linejoin="round" stroke-linecap="round"/></svg><svg class="r" style="left:1731px;top:147px;" width="64" height="64" viewBox="0 0 64 64"><circle cx="14" cy="13" r="12" stroke="#c4c4c4" stroke-width="2.8" fill="none" stroke-linejoin="round" stroke-linecap="round"/><circle cx="50" cy="13" r="12" stroke="#c4c4c4" stroke-width="2.8" fill="none" stroke-linejoin="round" stroke-linecap="round"/><circle cx="14" cy="49" r="12" stroke="#c4c4c4" stroke-width="2.8" fill="none" stroke-linejoin="round" stroke-linecap="round"/><circle cx="50" cy="49" r="12" stroke="#c4c4c4" stroke-width="2.8" fill="none" stroke-linejoin="round" stroke-linecap="round"/><path d="M32 1 L32 62 M1 31 L63 31" stroke="#c4c4c4" stroke-width="2.2" stroke-dasharray="5 4"/></svg><svg class="r" style="left:1819px;top:147px;" width="64" height="64" viewBox="0 0 64 64"><path d="M25 1 L25 25 L1 25 L1 14 Q1 1 14 1 Z M39 1 L50 1 Q63 1 63 14 L63 25 L39 25 Z M25 37 L25 62 L14 62 Q1 62 1 49 L1 37 Z M39 37 L63 37 L63 49 Q63 62 50 62 L39 62 Z" stroke="#c4c4c4" stroke-width="2.8" fill="none" stroke-linejoin="round" stroke-linecap="round"/><path d="M32 1 L32 62 M1 31 L63 31" stroke="#c4c4c4" stroke-width="2.2" stroke-dasharray="5 4"/></svg><svg class="r" style="left:1907px;top:147px;" width="64" height="64" viewBox="0 0 64 64"><rect x="2" y="1.5" width="60" height="7.5" rx="3.5" stroke="#2b3133" stroke-width="2.8" fill="none" stroke-linejoin="round" stroke-linecap="round"/><rect x="2" y="14.5" width="60" height="7.5" rx="3.5" stroke="#2b3133" stroke-width="2.8" fill="none" stroke-linejoin="round" stroke-linecap="round"/><rect x="2" y="27.5" width="60" height="7.5" rx="3.5" stroke="#2b3133" stroke-width="2.8" fill="none" stroke-linejoin="round" stroke-linecap="round"/><rect x="2" y="40.5" width="60" height="7.5" rx="3.5" stroke="#2b3133" stroke-width="2.8" fill="none" stroke-linejoin="round" stroke-linecap="round"/><rect x="2" y="54" width="60" height="7.5" rx="3.5" stroke="#2b3133" stroke-width="2.8" fill="none" stroke-linejoin="round" stroke-linecap="round"/></svg><div class="r" style="left:2014px;top:148px;width:3px;height:61px;background:#8e9192;"></div><div class="r" style="left:2862px;top:148px;width:3px;height:61px;background:#8e9192;"></div><svg class="r" style="left:2051px;top:147px;" width="64" height="64" viewBox="0 0 64 64"><rect x="19" y="19" width="25" height="25" rx="3" stroke="#2b3133" stroke-width="2.8" fill="none" stroke-linejoin="round" stroke-linecap="round"/><path d="M31.5 2 L31.5 14 M25 8 L31.5 2 L38 8 M31.5 50 L31.5 62 M25 56 L31.5 62 L38 56 M2 31.5 L14 31.5 M8 25 L2 31.5 L8 38 M50 31.5 L62 31.5 M56 25 L62 31.5 L56 38" stroke="#26998a" stroke-width="2.8" fill="none" stroke-linejoin="round" stroke-linecap="round"/></svg><svg class="r" style="left:2139px;top:147px;" width="64" height="64" viewBox="0 0 64 64"><rect x="19" y="19" width="25" height="25" rx="3" stroke="#2b3133" stroke-width="2.8" fill="none" stroke-linejoin="round" stroke-linecap="round"/><path d="M12 10 Q22 1 32 1 Q62 1 62 32 Q62 62 32 62" stroke="#2b3133" stroke-width="2.8" fill="none" stroke-linejoin="round" stroke-linecap="round"/><path d="M32 62 Q8 62 2 38" stroke="#2b3133" stroke-width="2.8" fill="none" stroke-dasharray="6 5"/><path d="M5 5 L5 16 L16 16" stroke="#2b3133" stroke-width="2.8" fill="none" stroke-linejoin="round" stroke-linecap="round"/></svg><svg class="r" style="left:2227px;top:147px;" width="64" height="64" viewBox="0 0 64 64"><rect x="19" y="19" width="25" height="25" rx="3" stroke="#2b3133" stroke-width="2.8" fill="none" stroke-linejoin="round" stroke-linecap="round"/><path d="M1.5 1.5 L61.5 1.5 L61.5 61.5 L1.5 61.5 Z" stroke="#2b3133" stroke-width="2.8" fill="none" stroke-dasharray="5 4"/><path d="M2 2 L15 15 M2 2 L2 12 M2 2 L12 2 M62 2 L49 15 M62 2 L52 2 M62 2 L62 12 M2 62 L15 49 M2 62 L2 52 M2 62 L12 62 M62 62 L49 49 M62 62 L52 62 M62 62 L62 52" stroke="#2b3133" stroke-width="2.8" fill="none" stroke-linejoin="round" stroke-linecap="round"/></svg><svg class="r" style="left:2315px;top:147px;" width="64" height="64" viewBox="0 0 64 64"><path d="M35 1 L62 27 L35 52 L9 27 Z" stroke="#2b3133" stroke-width="2.8" fill="none" stroke-linejoin="round" stroke-linecap="round"/><path d="M14 38 L5 50 M5 50 L5 41 M5 50 L14 48 M1 61 L63 61" stroke="#2b3133" stroke-width="2.8" fill="none" stroke-linejoin="round" stroke-linecap="round"/></svg><svg class="r" style="left:2403px;top:147px;" width="64" height="64" viewBox="0 0 64 64"><rect x="17" y="1.5" width="45" height="45" rx="3" stroke="#c4c4c4" stroke-width="2.8" fill="none" stroke-linejoin="round" stroke-linecap="round"/><rect x="2" y="17" width="45" height="45" rx="3" stroke="#c4c4c4" stroke-width="2.8" fill="none" stroke-linejoin="round" stroke-linecap="round"/><path d="M20 44 L44 20 M20 34 L34 20 M28 44 L44 28 M20 24 L24 20 M38 44 L44 38" stroke="#c4c4c4" stroke-width="2.2"/></svg><svg class="r" style="left:2491px;top:147px;" width="64" height="64" viewBox="0 0 64 64"><path d="M2 62 L2 2 L60 2 L60 40 M60 58 L60 62 L56 62 M2 22 L40 22 L40 54" stroke="#2b3133" stroke-width="2.8" fill="none" stroke-linejoin="round" stroke-linecap="round"/><path d="M10 22 L10 62 M17 22 L17 62 M24 22 L24 62 M2 62 L30 62" stroke="#2b3133" stroke-width="2.8" fill="none" stroke-linejoin="round" stroke-linecap="round"/><path d="M55 40 L46 52 Q38 52 38 62 Q48 62 50 56 L58 44 Q58 38 55 40" stroke="#2b3133" stroke-width="2.8" fill="none" stroke-linejoin="round" stroke-linecap="round"/></svg><svg class="r" style="left:2579px;top:147px;" width="64" height="64" viewBox="0 0 64 64"><path d="M36 62 L2 62 L2 2 L60 2 L60 40 M60 58 L60 62 L56 62" stroke="#2b3133" stroke-width="2.8" fill="none" stroke-linejoin="round" stroke-linecap="round"/><path d="M18 8 L22 8 M16 14 L20 14 M18 20 L22 20 M16 26 L20 26 M18 32 L22 32 M16 38 L20 38 M18 44 L22 44 M16 50 L20 50 M18 56 L22 56" stroke="#2b3133" stroke-width="2.4"/><path d="M55 40 L46 52 Q38 52 38 62 Q48 62 50 56 L58 44 Q58 38 55 40" stroke="#2b3133" stroke-width="2.8" fill="none" stroke-linejoin="round" stroke-linecap="round"/></svg><svg class="r" style="left:2667px;top:147px;" width="64" height="64" viewBox="0 0 64 64"><path d="M2 3 Q2 1 4 1 L56 1 Q60 1 60 5 L60 14 Q60 17 56 17 L38 17 L38 58 Q38 62 34 62 L28 62 Q24 62 24 58 L24 17 L6 17 Q2 17 2 13 Z" stroke="#2b3133" stroke-width="2.8" fill="none" stroke-linejoin="round" stroke-linecap="round"/><path d="M60 7 Q64 7 64 11 L64 19 Q64 22 60 22 L42 22 L42 62 Q42 66 38 66 L31 66" stroke="#2b3133" stroke-width="2.8" fill="none" stroke-linejoin="round" stroke-linecap="round"/></svg><svg class="r" style="left:2755px;top:147px;" width="64" height="64" viewBox="0 0 64 64"><path d="M2 14 L30 2 L50 2 L50 8 L62 8 L50 14 Z M2 14 L2 22 L50 22 L50 14 M20 22 L20 48 M2 48 L2 56 L50 56 L62 50 L50 48 Z M40 56 L40 62 M28 56 L28 62 M50 22 L50 48" stroke="#2b3133" stroke-width="2.8" fill="none" stroke-linejoin="round" stroke-linecap="round"/><circle cx="14" cy="36" r="8" stroke="#2b3133" stroke-width="2.8" fill="none" stroke-linejoin="round" stroke-linecap="round"/><path d="M30 26 L40 26 M30 32 L40 32 M30 38 L40 38 M30 44 L40 44" stroke="#2b3133" stroke-width="2.2"/></svg><svg class="r" style="left:2899px;top:147px;" width="64" height="64" viewBox="0 0 64 64"><rect x="2" y="1.5" width="59" height="60" rx="3" stroke="#2b3133" stroke-width="2.8" fill="none" stroke-linejoin="round" stroke-linecap="round"/><path d="M32 2 L32 14 Q40 14 40 20 Q40 26 32 26 L32 36 L22 36 Q22 28 16 28 Q10 28 10 36 L2 36 M32 36 L44 36 Q44 44 50 44 Q56 44 56 36 L61 36 M32 36 L32 46 Q24 46 24 52 Q24 58 32 58 L32 62" stroke="#2b3133" stroke-width="2.8" fill="none" stroke-linejoin="round" stroke-linecap="round"/></svg><div class="r" style="left:866px;top:132px;width:48px;height:48px;background:#f9f9f9;"></div><svg class="r" style="left:866px;top:132px;" width="48" height="48" viewBox="0 0 48 48"><path d="M18.7 7.4 L8.8 16 L18.7 25.1 M27.4 20.6 L36.8 29.6 L27.4 38.3" fill="none" stroke="#253033" stroke-width="2.6" stroke-linecap="round" stroke-linejoin="round"/></svg><div class="r" style="left:2044px;top:228px;width:742px;height:129px;background:#ffffff;border-radius:9px;"></div><div class="t" style="left:2084.0px;top:268.7px;font-size:26.7px;color:#353c3e;font-weight:normal;">World coordinates</div><div class="t" style="left:2371.5px;top:269.0px;font-size:26px;color:#f00000;font-weight:normal;">X</div><div class="t" style="left:2497.5px;top:269.0px;font-size:26px;color:#1a9a1a;font-weight:normal;">Y</div><div class="t" style="left:2623.5px;top:269.0px;font-size:26px;color:#0000f0;font-weight:normal;">Z</div><div class="t" style="left:2084.0px;top:317.6px;font-size:26px;color:#31393b;font-weight:normal;">Position</div><div class="r" style="left:2325px;top:296px;width:107px;height:39px;border:2px solid #b9b9c0;border-radius:5px;background:#fff;"></div><div class="t" style="left:2334.0px;top:317.9px;font-size:25.1px;color:#2b3234;font-weight:normal;">125.63</div><div class="r" style="left:2451px;top:296px;width:107px;height:39px;border:2px solid #b9b9c0;border-radius:5px;background:#fff;"></div><div class="t" style="left:2460.0px;top:317.9px;font-size:25.1px;color:#2b3234;font-weight:normal;">135.11</div><div class="r" style="left:2577px;top:296px;width:107px;height:39px;border:2px solid #b9b9c0;border-radius:5px;background:#fff;"></div><div class="t" style="left:2586.0px;top:317.9px;font-size:25.1px;color:#2b3234;font-weight:normal;">17.79</div><div class="t" style="left:2704.0px;top:317.7px;font-size:25.6px;color:#31393b;font-weight:normal;">mm</div></div><div class="r" style="left:8px;top:4px;width:3358px;height:1892px;border-radius:17px 17px 19px 19px;box-shadow:inset 0 1.6px 0 rgba(255,255,255,0.5), inset 0 0 0 1.2px rgba(255,255,255,0.16);pointer-events:none;"></div></body></html>
